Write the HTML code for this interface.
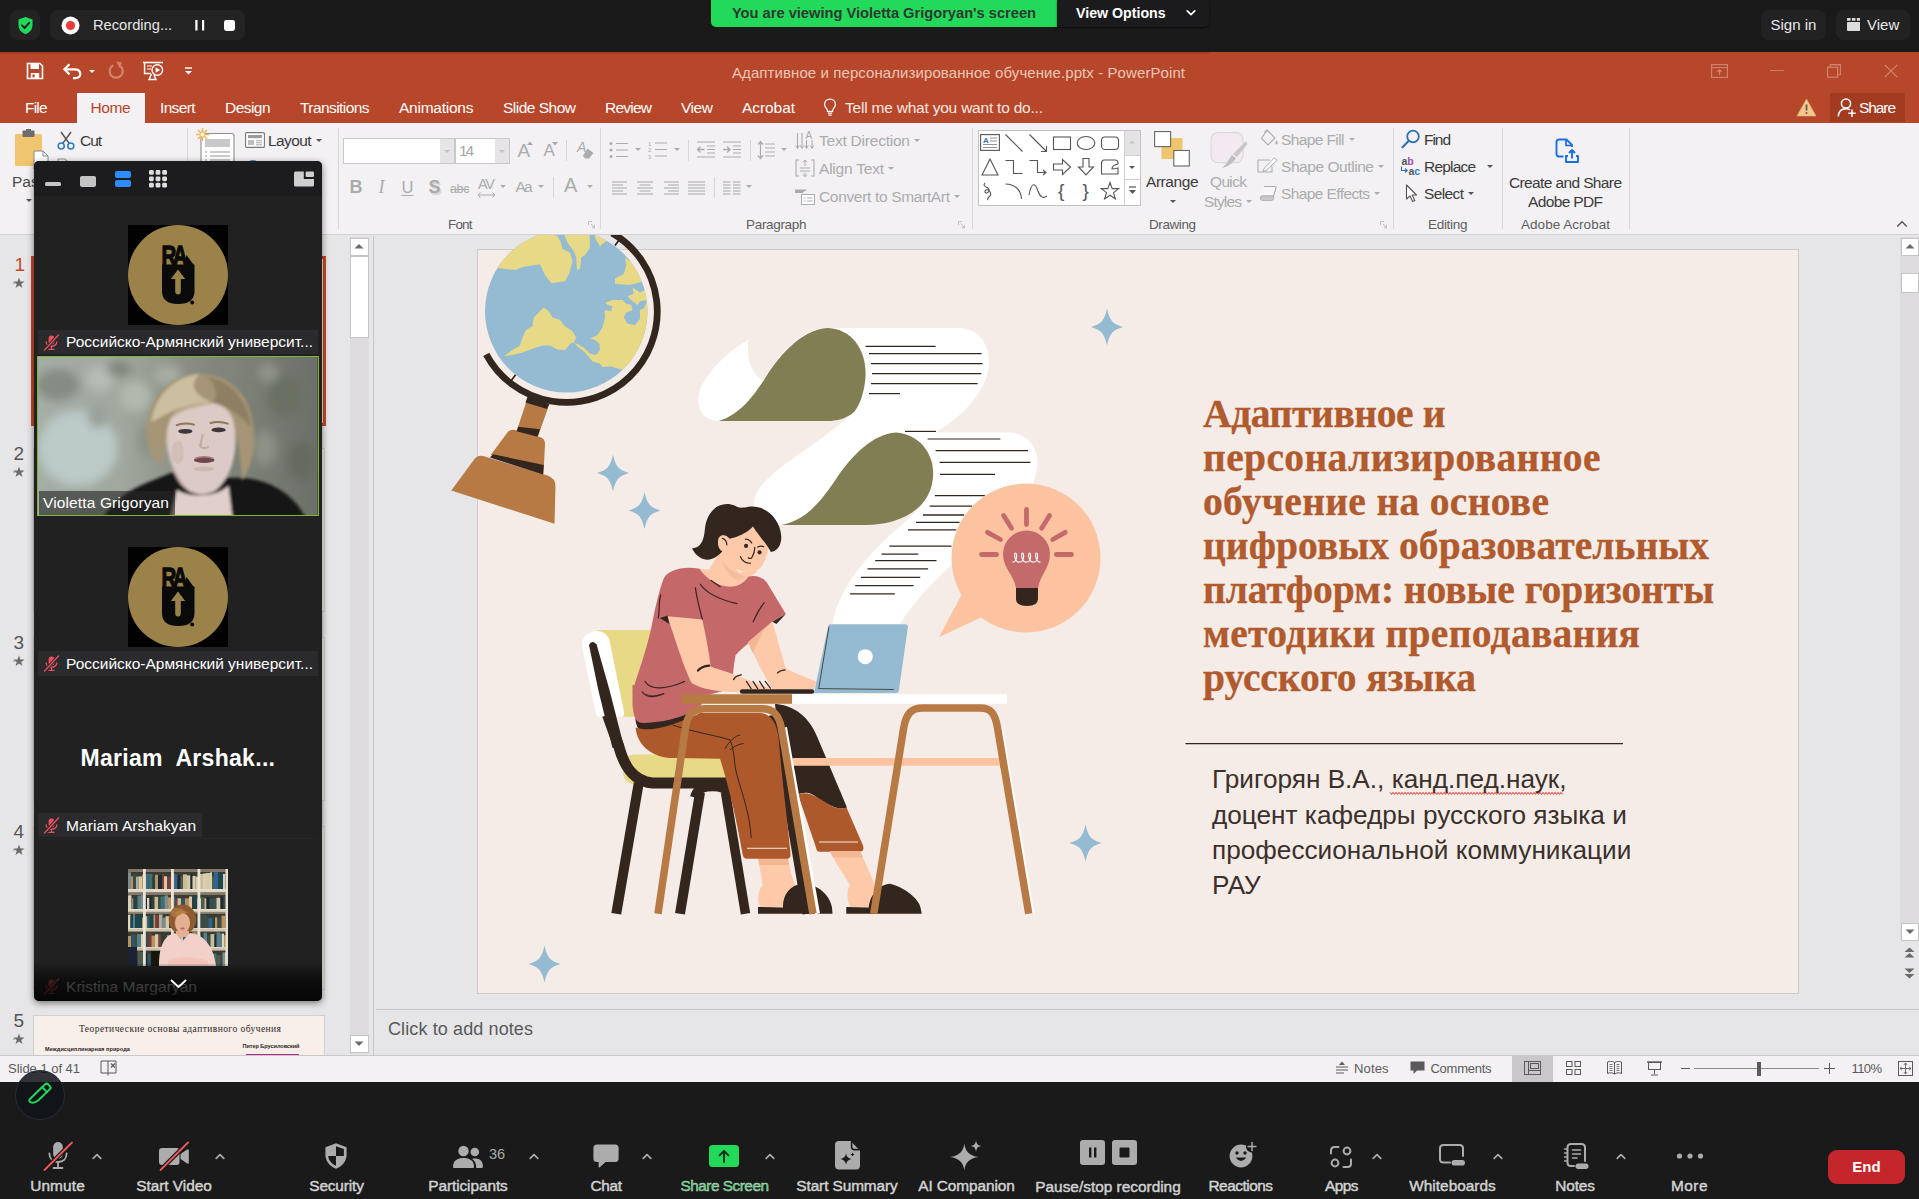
<!DOCTYPE html>
<html lang="en">
<head>
<meta charset="utf-8">
<title>Zoom Meeting</title>
<style>
*{box-sizing:border-box;margin:0;padding:0}
html,body{width:1919px;height:1199px;overflow:hidden;background:#1a1a1a;font-family:"Liberation Sans",sans-serif;}
.abs{position:absolute}
#root{position:relative;width:1919px;height:1199px;overflow:hidden}
/* zoom top */
#ztop{left:0;top:0;width:1919px;height:52px;background:#1a1a1a}
/* ppt */
#ppt{left:0;top:52px;width:1919px;height:1030px;background:#e6e6e8;overflow:hidden}
#ptitle{left:0;top:0;width:1919px;height:71px;background:#b7472a}
#ribbon{left:0;top:71px;width:1919px;height:111px;background:#f3f1f3;border-bottom:1px solid #d4d3d5}
#status{left:0;top:1003px;width:1919px;height:27px;background:#f3f1f3;border-top:1px solid #c8c7c9}
#slide{left:477px;top:197px;width:1322px;height:745px;background:#f5ece7;border:1px solid #cfcdce}
/* zoom bottom */
#zbot{left:0;top:1082px;width:1919px;height:117px;background:#1a1a1a}
/* gallery */
#gal{left:34px;top:161px;width:288px;height:840px;background:#222;border-radius:6px;overflow:hidden;box-shadow:0 2px 8px rgba(0,0,0,.45)}

/* ---- zoom top bar ---- */
.zbtn{position:absolute;background:#242424;border-radius:8px;color:#e8e8e8;font-size:15px;line-height:30px;height:30px;top:10px}
#zshield{left:10.2px;top:10.2px;width:29.8px;height:29.8px;border-radius:8px;background:#232323;position:absolute}
#zbanner{position:absolute;left:711px;top:0;width:346px;height:27px;background:#23d959;border-radius:0 0 0 5px;color:#2c3a32;font-weight:700;font-size:14.7px;line-height:27px;text-align:center;letter-spacing:-0.02px}
#zvopt{position:absolute;left:1057px;top:0;width:152px;height:27px;background:#1b1b1d;border-radius:0 0 5px 0;color:#fff;font-weight:700;font-size:14.2px;line-height:27px;padding-left:19px;box-shadow:0 1px 2px rgba(0,0,0,.6)}
/* ---- zoom bottom bar ---- */
.zi{position:absolute;top:0;height:117px;text-align:center;color:#d2d2d2;font-weight:700;font-size:14.2px;white-space:nowrap}
.zi svg{position:absolute;left:50%;transform:translateX(-50%)}
.zi .lb{position:absolute;left:50%;transform:translateX(-50%);top:93px;line-height:20px}
.car{position:absolute;top:68px;width:12px;height:12px}
.zl{top:94px;text-align:center;font-weight:400;-webkit-text-stroke:0.45px #d2d2d2;font-size:15.4px;line-height:20px;color:#d2d2d2;white-space:nowrap}

.t{position:absolute;white-space:pre}
</style>
</head>
<body>
<div id="root">
<div id="ztop" class="abs">
  <div id="zshield"><svg style="position:absolute;left:1.4px;top:1.6px" width="27" height="27" viewBox="0 0 27 27"><path d="M13.5 5 L20.5 7.6 V13 C20.5 17.4 17.6 20.6 13.5 22.2 C9.4 20.6 6.5 17.4 6.5 13 V7.6 Z" fill="#23d959"/><path d="M10 13.4 L12.6 16 L17.2 10.9" fill="none" stroke="#1f2a22" stroke-width="2" stroke-linecap="round" stroke-linejoin="round"/></svg></div>
  <div class="zbtn" style="left:50px;width:195px;">
    <svg class="abs" style="left:11px;top:5.5px" width="19" height="19" viewBox="0 0 19 19"><circle cx="9.5" cy="9.5" r="9" fill="#fff"/><circle cx="9.5" cy="9.5" r="4.6" fill="#f03a3a"/></svg>
    <span class="abs" style="left:43px;top:0;font-size:14.7px;color:#e4e4e4">Recording...</span>
    <svg class="abs" style="left:144px;top:9.5px" width="12" height="11" viewBox="0 0 12 11"><rect x="1.3" y="0" width="2.2" height="10.5" fill="#fff"/><rect x="8" y="0" width="2.2" height="10.5" fill="#fff"/></svg>
    <div class="abs" style="left:174px;top:9.5px;width:11px;height:11px;border-radius:2.4px;background:#fff"></div>
  </div>
  <div id="zbanner">You are viewing Violetta Grigoryan's screen</div>
  <div id="zvopt">View Options<svg class="abs" style="left:129px;top:9px" width="10" height="8" viewBox="0 0 10 8"><path d="M1.2 1.8 L5 5.6 L8.8 1.8" fill="none" stroke="#fff" stroke-width="1.7" stroke-linecap="round" stroke-linejoin="round"/></svg></div>
  <div class="zbtn" style="left:1761.3px;top:9.8px;height:30px;line-height:30px;width:64.3px;text-align:center;background:#222">Sign in</div>
  <div class="zbtn" style="left:1836px;top:9.8px;height:30px;line-height:30px;width:73.8px;background:#222">
    <svg class="abs" style="left:10.8px;top:8.5px" width="13.4" height="13" viewBox="0 0 13.4 13"><rect x="0" y="0" width="3.6" height="2.8" rx="0.6" fill="#dcdcdc"/><rect x="4.9" y="0" width="3.6" height="2.8" rx="0.6" fill="#dcdcdc"/><rect x="9.8" y="0" width="3.6" height="2.8" rx="0.6" fill="#dcdcdc"/><rect x="0" y="4" width="13.4" height="9" rx="1" fill="#dcdcdc"/></svg>
    <span class="abs" style="left:31px;top:0">View</span>
  </div>
</div>
<!-- ppt_top -->
<div class="abs" style="left:0px;top:52px;width:1919px;height:71px;background:#b7472a;"></div>
<div class="abs" style="left:0px;top:52px;width:1209px;height:1.5px;background:#a23c22;"></div>
<svg class="abs" style="left:26px;top:62px;" width="18" height="18" viewBox="0 0 18 18"><path d="M1.5 1.5 H14 L16.5 4 V16.5 H1.5 Z" fill="none" stroke="#fff" stroke-width="1.6"/><rect x="4.5" y="2" width="8.5" height="5" fill="#fff"/><rect x="4.8" y="11" width="8.4" height="5.5" fill="#fff"/><rect x="6.4" y="12.4" width="2.2" height="3" fill="#b7472a"/></svg>
<svg class="abs" style="left:62px;top:62px;" width="22" height="18" viewBox="0 0 22 18"><path d="M7.5 2.2 L2.4 7.3 L7.5 12.4" fill="none" stroke="#fff" stroke-width="2.2" stroke-linejoin="miter"/><path d="M3 7.3 H12.5 C20 7.3 20 16 13.5 16.2 H11" fill="none" stroke="#fff" stroke-width="2.2"/></svg>
<svg class="abs" style="left:89.0px;top:70.0px;" width="6" height="3.5" viewBox="0 0 6 3.5"><path d="M0 0 H6 L3.0 3.0 Z" fill="#fff"/></svg>
<svg class="abs" style="left:107px;top:61px;" width="18" height="19" viewBox="0 0 18 19"><path d="M13.6 5.2 A6.6 6.6 0 1 1 6.2 4.2" fill="none" stroke="#d2846e" stroke-width="2.2"/><path d="M9.2 0.5 L14.8 1.6 L13 7.4 Z" fill="#d2846e"/></svg>
<svg class="abs" style="left:142px;top:61px;" width="24" height="20" viewBox="0 0 24 20"><path d="M1 1.5 H21" stroke="#fff" stroke-width="1.6"/><path d="M2.6 2 V12.5 H9" fill="none" stroke="#fff" stroke-width="1.5"/><path d="M5 5 H10 M5 8 H9" stroke="#fff" stroke-width="1.2"/><circle cx="15.3" cy="9" r="5.3" fill="none" stroke="#fff" stroke-width="1.4"/><path d="M13.6 6.2 L18.2 9 L13.6 11.8 Z" fill="#fff"/><path d="M9.5 13 L7 18.5 H14 L12 14" fill="none" stroke="#fff" stroke-width="1.4"/></svg>
<svg class="abs" style="left:184px;top:67px;" width="9" height="9" viewBox="0 0 9 9"><path d="M1 1 H8" stroke="#fff" stroke-width="1.4"/><path d="M1 4 H8 L4.5 7.6 Z" fill="#fff"/></svg>
<div class="t" style="left:732.0px;top:62.5px;font-size:15px;line-height:20px;color:#edc6b8;letter-spacing:0.086px;">Адаптивное и персонализированное обучение.pptx - PowerPoint</div>
<svg class="abs" style="left:1711px;top:64px;" width="17" height="14" viewBox="0 0 17 14"><rect x="0.6" y="0.6" width="15.8" height="12.8" fill="none" stroke="#d28670" stroke-width="1.1"/><path d="M0.6 3.6 H16.4" stroke="#d28670" stroke-width="1"/><path d="M8.5 11 V6 M6.2 8 L8.5 5.7 L10.8 8" fill="none" stroke="#d28670" stroke-width="1.1"/></svg>
<div class="abs" style="left:1770px;top:70px;width:14px;height:1px;background:#cf7a63;"></div>
<svg class="abs" style="left:1827px;top:64px;" width="14" height="14" viewBox="0 0 14 14"><rect x="0.6" y="3.2" width="10" height="10" fill="none" stroke="#d28670" stroke-width="1.1"/><path d="M3.2 3.2 V0.6 H13.4 V10.8 H10.6" fill="none" stroke="#d28670" stroke-width="1.1"/></svg>
<svg class="abs" style="left:1884px;top:64px;" width="14" height="14" viewBox="0 0 14 14"><path d="M0.8 0.8 L13.2 13.2 M13.2 0.8 L0.8 13.2" stroke="#d28670" stroke-width="1.2"/></svg>
<div class="abs" style="left:77px;top:93px;width:68px;height:30px;background:#f3f1f3;"></div>
<div class="t" style="left:25.0px;top:97.5px;font-size:15.5px;line-height:20px;color:#fff;letter-spacing:-0.826px;">File</div>
<div class="t" style="left:160.0px;top:97.5px;font-size:15.5px;line-height:20px;color:#fff;letter-spacing:-0.653px;">Insert</div>
<div class="t" style="left:225.0px;top:97.5px;font-size:15.5px;line-height:20px;color:#fff;letter-spacing:-0.550px;">Design</div>
<div class="t" style="left:300.0px;top:97.5px;font-size:15.5px;line-height:20px;color:#fff;letter-spacing:-0.573px;">Transitions</div>
<div class="t" style="left:399.0px;top:97.5px;font-size:15.5px;line-height:20px;color:#fff;letter-spacing:-0.242px;">Animations</div>
<div class="t" style="left:503.0px;top:97.5px;font-size:15.5px;line-height:20px;color:#fff;letter-spacing:-0.505px;">Slide Show</div>
<div class="t" style="left:605.0px;top:97.5px;font-size:15.5px;line-height:20px;color:#fff;letter-spacing:-0.765px;">Review</div>
<div class="t" style="left:681.0px;top:97.5px;font-size:15.5px;line-height:20px;color:#fff;letter-spacing:-0.439px;">View</div>
<div class="t" style="left:742.0px;top:97.5px;font-size:15.5px;line-height:20px;color:#fff;letter-spacing:-0.070px;">Acrobat</div>
<div class="t" style="left:90.5px;top:97.5px;font-size:15.5px;line-height:20px;color:#bb4429;letter-spacing:-0.449px;">Home</div>
<svg class="abs" style="left:823px;top:98px;" width="14" height="19" viewBox="0 0 14 19"><path d="M7 1.2 C3.6 1.2 1.6 3.6 1.6 6.4 C1.6 8.6 3 9.8 3.8 11 C4.3 11.8 4.4 12.6 4.4 13.4 H9.6 C9.6 12.6 9.7 11.8 10.2 11 C11 9.8 12.4 8.6 12.4 6.4 C12.4 3.6 10.4 1.2 7 1.2 Z M4.8 15.2 H9.2 M5.4 17.2 H8.6" fill="none" stroke="#fff" stroke-width="1.2"/></svg>
<div class="t" style="left:845.0px;top:97.5px;font-size:15.5px;line-height:20px;color:#fbe9e3;letter-spacing:-0.213px;">Tell me what you want to do...</div>
<svg class="abs" style="left:1796px;top:98px;" width="21" height="19" viewBox="0 0 21 19"><path d="M10.5 1 L20 18 H1 Z" fill="#f1c98d" stroke="#e0b070" stroke-width="0.6" stroke-linejoin="round"/><path d="M10.5 6.5 V12.5" stroke="#6b5848" stroke-width="1.8"/><circle cx="10.5" cy="15" r="1.1" fill="#b0463a"/></svg>
<div class="abs" style="left:1830px;top:93px;width:75px;height:29px;background:#a33b20;"></div>
<svg class="abs" style="left:1837px;top:97px;" width="20" height="21" viewBox="0 0 20 21"><circle cx="9" cy="6.5" r="4.6" fill="none" stroke="#fff" stroke-width="1.5"/><path d="M1.2 19.5 C1.6 14.4 4.6 11.8 9 11.8 C10.6 11.8 12 12.2 13 12.8" fill="none" stroke="#fff" stroke-width="1.5"/><path d="M15 12.6 V20 M11.3 16.3 H18.7" stroke="#fff" stroke-width="1.5"/></svg>
<div class="t" style="left:1859.0px;top:98.0px;font-size:15.5px;line-height:20px;color:#fff;letter-spacing:-1.091px;">Share</div>
<div class="abs" style="left:0px;top:123px;width:1919px;height:111px;background:#f3f1f3;"></div>
<div class="abs" style="left:0px;top:234px;width:1919px;height:1px;background:#d2d0d2;"></div>
<div class="abs" style="left:187px;top:128px;width:1px;height:101px;background:#d8d6d8;"></div>
<div class="abs" style="left:338px;top:128px;width:1px;height:101px;background:#d8d6d8;"></div>
<div class="abs" style="left:600.3px;top:128px;width:1px;height:101px;background:#d8d6d8;"></div>
<div class="abs" style="left:971.5px;top:128px;width:1px;height:101px;background:#d8d6d8;"></div>
<div class="abs" style="left:1392.5px;top:128px;width:1px;height:101px;background:#d8d6d8;"></div>
<div class="abs" style="left:1502px;top:128px;width:1px;height:101px;background:#d8d6d8;"></div>
<div class="abs" style="left:1628.7px;top:128px;width:1px;height:101px;background:#d8d6d8;"></div>
<svg class="abs" style="left:14px;top:129px;" width="36" height="40" viewBox="0 0 36 40"><rect x="1" y="5" width="27" height="32" rx="1.5" fill="#efc56f"/><rect x="8.5" y="1.5" width="12" height="6.5" rx="1" fill="#6d6d6d"/><rect x="12" y="0" width="5" height="3" fill="#6d6d6d"/><path d="M20 22 H29 L34 27 V40 H20 Z" fill="#fff" stroke="#8a8a8a" stroke-width="1"/><path d="M29 22 V27 H34" fill="none" stroke="#8a8a8a" stroke-width="1"/></svg>
<div class="t" style="left:12.0px;top:172.0px;font-size:15.5px;line-height:20px;color:#4a4a4a;">Paste</div>
<svg class="abs" style="left:26.0px;top:199.0px;" width="6" height="3.5" viewBox="0 0 6 3.5"><path d="M0 0 H6 L3.0 3.0 Z" fill="#555"/></svg>
<svg class="abs" style="left:57px;top:131px;" width="18" height="19" viewBox="0 0 18 19"><path d="M4 1 L12.2 12.4 M14 1 L5.8 12.4" stroke="#555" stroke-width="1.5"/><circle cx="4.2" cy="15" r="3" fill="none" stroke="#2b79c2" stroke-width="1.5"/><circle cx="13.8" cy="15" r="3" fill="none" stroke="#2b79c2" stroke-width="1.5"/></svg>
<div class="t" style="left:80.0px;top:131.0px;font-size:15.5px;line-height:20px;color:#3b3b3b;letter-spacing:-1.060px;">Cut</div>
<svg class="abs" style="left:57px;top:158px;" width="14" height="8" viewBox="0 0 14 8"><path d="M1 8 V1 H8 L11 4" fill="none" stroke="#9a9a9a" stroke-width="1.1"/></svg>
<svg class="abs" style="left:196px;top:128px;" width="40" height="40" viewBox="0 0 40 40"><rect x="5" y="5.5" width="33" height="36" rx="2" fill="#fff" stroke="#8d8d8d" stroke-width="1.1"/><rect x="9" y="11" width="25" height="8" fill="#c9c9c9"/><path d="M9 24 H11 M14 24 H34 M9 28 H11 M14 28 H34 M9 32 H11 M14 32 H34" stroke="#9a9a9a" stroke-width="1.1"/><g stroke="#eeb45a" stroke-width="1.4"><path d="M6.5 0 V13 M0 6.5 H13 M1.9 1.9 L11.1 11.1 M11.1 1.9 L1.9 11.1"/></g><circle cx="6.5" cy="6.5" r="2.6" fill="#fff3d6" stroke="#eeb45a" stroke-width="1"/></svg>
<svg class="abs" style="left:245px;top:132px;" width="20" height="16" viewBox="0 0 20 16"><rect x="0.6" y="0.6" width="18.8" height="14.8" rx="1" fill="#fff" stroke="#777" stroke-width="1.1"/><rect x="3" y="3" width="14" height="3.2" fill="#9a9a9a"/><rect x="3" y="8" width="6" height="5" fill="#bdbdbd"/><path d="M11 8.8 H17 M11 10.8 H17 M11 12.8 H17" stroke="#9a9a9a" stroke-width="0.9"/></svg>
<div class="t" style="left:268.0px;top:131.0px;font-size:15.5px;line-height:20px;color:#3b3b3b;letter-spacing:-0.608px;">Layout</div>
<svg class="abs" style="left:316.0px;top:139.0px;" width="6" height="3.5" viewBox="0 0 6 3.5"><path d="M0 0 H6 L3.0 3.0 Z" fill="#555"/></svg>
<svg class="abs" style="left:247px;top:159px;" width="12" height="6" viewBox="0 0 12 6"><path d="M1 5 C2 1.5 7 0.5 10 3" fill="none" stroke="#4b8fd0" stroke-width="1.4"/></svg>
<div class="abs" style="left:343px;top:137.5px;width:111.5px;height:26px;background:#fff;border:1px solid #c9c7c9"></div>
<div class="abs" style="left:440px;top:138.5px;width:13.5px;height:24px;background:#e6e4e6;"></div>
<svg class="abs" style="left:444.0px;top:149.5px;" width="6" height="3.5" viewBox="0 0 6 3.5"><path d="M0 0 H6 L3.0 3.0 Z" fill="#c2c0c2"/></svg>
<div class="abs" style="left:455px;top:137.5px;width:54.5px;height:26px;background:#fff;border:1px solid #c9c7c9"></div>
<div class="abs" style="left:495px;top:138.5px;width:13.5px;height:24px;background:#e6e4e6;"></div>
<svg class="abs" style="left:499.0px;top:149.5px;" width="6" height="3.5" viewBox="0 0 6 3.5"><path d="M0 0 H6 L3.0 3.0 Z" fill="#c2c0c2"/></svg>
<div class="t" style="left:459.0px;top:140.5px;font-size:15.5px;line-height:20px;color:#a6a4a6;letter-spacing:-2.241px;">14</div>
<div class="t" style="left:517.5px;top:137.5px;font-size:19px;line-height:25px;color:#ababad;">A</div>
<svg class="abs" style="left:527px;top:141px;" width="6" height="4" viewBox="0 0 6 4"><path d="M0 4 L3 0.5 L6 4 Z" fill="#ababad"/></svg>
<div class="t" style="left:543.5px;top:140.0px;font-size:17px;line-height:22px;color:#ababad;">A</div>
<svg class="abs" style="left:552px;top:142px;" width="6" height="4" viewBox="0 0 6 4"><path d="M0 0 L3 3.5 L6 0 Z" fill="#ababad"/></svg>
<div class="abs" style="left:566px;top:140px;width:1px;height:21px;background:#d8d6d8;"></div>
<div class="t" style="left:577.0px;top:138.0px;font-size:14px;line-height:18px;color:#ababad;font-style:italic;">A</div>
<svg class="abs" style="left:582px;top:148px;" width="12" height="11" viewBox="0 0 12 11"><path d="M5.5 0.5 L11.5 5 L7 10.5 H3.5 L0.8 8 Z" fill="#ababad"/></svg>
<div class="t" style="left:349.5px;top:175.5px;font-size:18px;line-height:23px;color:#ababad;font-weight:700;">B</div>
<div class="t" style="left:378.5px;top:175.5px;font-size:18px;line-height:23px;color:#ababad;font-style:italic;font-family:'Liberation Serif',serif;">I</div>
<div class="t" style="left:401.5px;top:176.5px;font-size:16.5px;line-height:21px;color:#ababad;text-decoration:underline;text-underline-offset:2px">U</div>
<div class="t" style="left:428.5px;top:175.5px;font-size:18px;line-height:23px;color:#ababad;font-weight:700;text-shadow:1.5px 1.5px 1px #d6d4d6">S</div>
<div class="t" style="left:450.0px;top:181.0px;font-size:12.5px;line-height:16px;color:#ababad;letter-spacing:-0.327px;text-decoration:line-through">abc</div>
<div class="t" style="left:478.0px;top:174.5px;font-size:14.5px;line-height:19px;color:#ababad;letter-spacing:-1.268px;">AV</div>
<svg class="abs" style="left:477px;top:192px;" width="19" height="6" viewBox="0 0 19 6"><path d="M1 3 H18 M3.5 0.5 L1 3 L3.5 5.5 M15.5 0.5 L18 3 L15.5 5.5" fill="none" stroke="#ababad" stroke-width="1"/></svg>
<svg class="abs" style="left:500.0px;top:185.0px;" width="6" height="3.5" viewBox="0 0 6 3.5"><path d="M0 0 H6 L3.0 3.0 Z" fill="#ababad"/></svg>
<div class="t" style="left:515.5px;top:177.0px;font-size:15.5px;line-height:20px;color:#ababad;letter-spacing:-1.960px;">Aa</div>
<svg class="abs" style="left:538.0px;top:185.0px;" width="6" height="3.5" viewBox="0 0 6 3.5"><path d="M0 0 H6 L3.0 3.0 Z" fill="#ababad"/></svg>
<div class="abs" style="left:553px;top:177px;width:1px;height:21px;background:#d8d6d8;"></div>
<div class="t" style="left:564.0px;top:171.5px;font-size:20px;line-height:26px;color:#ababad;">A</div>
<svg class="abs" style="left:587.0px;top:185.0px;" width="6" height="3.5" viewBox="0 0 6 3.5"><path d="M0 0 H6 L3.0 3.0 Z" fill="#ababad"/></svg>
<div class="t" style="left:448.0px;top:215.8px;font-size:13.5px;line-height:18px;color:#5e5e5e;letter-spacing:-0.838px;">Font</div>
<svg class="abs" style="left:587.5px;top:221px;" width="7.5" height="7.5" viewBox="0 0 9 9"><path d="M0.5 5 V0.5 H5" fill="none" stroke="#b5b3b5" stroke-width="1"/><path d="M3 3 L8 8 M8 4.5 V8 H4.5" fill="none" stroke="#b5b3b5" stroke-width="1"/></svg>
<svg class="abs" style="left:609px;top:141px;" width="20" height="18" viewBox="0 0 20 18"><circle cx="2" cy="2.5" r="1.5" fill="#ababad"/><circle cx="2" cy="9" r="1.5" fill="#ababad"/><circle cx="2" cy="15.5" r="1.5" fill="#ababad"/><path d="M7 2.5 H19 M7 9 H19 M7 15.5 H19" stroke="#ababad" stroke-width="1.1"/></svg>
<svg class="abs" style="left:634.5px;top:148.0px;" width="6" height="3.5" viewBox="0 0 6 3.5"><path d="M0 0 H6 L3.0 3.0 Z" fill="#ababad"/></svg>
<svg class="abs" style="left:648px;top:140px;" width="20" height="19" viewBox="0 0 20 19"><path d="M7 3 H19 M7 9.5 H19 M7 16 H19" stroke="#ababad" stroke-width="1.1"/><text x="0" y="5.5" font-size="6" fill="#ababad" font-family="Liberation Sans,sans-serif">1</text><text x="0" y="12" font-size="6" fill="#ababad" font-family="Liberation Sans,sans-serif">2</text><text x="0" y="18.5" font-size="6" fill="#ababad" font-family="Liberation Sans,sans-serif">3</text></svg>
<svg class="abs" style="left:674.0px;top:148.0px;" width="6" height="3.5" viewBox="0 0 6 3.5"><path d="M0 0 H6 L3.0 3.0 Z" fill="#ababad"/></svg>
<div class="abs" style="left:688px;top:140px;width:1px;height:21px;background:#d8d6d8;"></div>
<svg class="abs" style="left:696px;top:141px;" width="20" height="17" viewBox="0 0 20 17"><path d="M1 1 H19 M11 5 H19 M11 8.5 H19 M11 12 H19 M1 16 H19" stroke="#ababad" stroke-width="1.1"/><path d="M8.5 8.5 H1.5 M4.5 5.5 L1.5 8.5 L4.5 11.5" fill="none" stroke="#ababad" stroke-width="1.3"/></svg>
<svg class="abs" style="left:722px;top:141px;" width="20" height="17" viewBox="0 0 20 17"><path d="M1 1 H19 M11 5 H19 M11 8.5 H19 M11 12 H19 M1 16 H19" stroke="#ababad" stroke-width="1.1"/><path d="M1 8.5 H8 M5 5.5 L8 8.5 L5 11.5" fill="none" stroke="#ababad" stroke-width="1.3"/></svg>
<div class="abs" style="left:749.5px;top:140px;width:1px;height:21px;background:#d8d6d8;"></div>
<svg class="abs" style="left:757px;top:140px;" width="19" height="20" viewBox="0 0 19 20"><path d="M8 4 H18 M8 8 H18 M8 12 H18 M8 16 H18" stroke="#ababad" stroke-width="1.1"/><path d="M3.5 2 V18 M1 4.5 L3.5 1.5 L6 4.5 M1 15.5 L3.5 18.5 L6 15.5" fill="none" stroke="#ababad" stroke-width="1.2"/></svg>
<svg class="abs" style="left:781.0px;top:148.0px;" width="6" height="3.5" viewBox="0 0 6 3.5"><path d="M0 0 H6 L3.0 3.0 Z" fill="#ababad"/></svg>
<svg class="abs" style="left:611.5px;top:180.5px;" width="18" height="14" viewBox="0 0 18 14"><path d="M0 1 H15" stroke="#ababad" stroke-width="1.1"/><path d="M0 4 H11" stroke="#ababad" stroke-width="1.1"/><path d="M0 7 H15" stroke="#ababad" stroke-width="1.1"/><path d="M0 10 H11" stroke="#ababad" stroke-width="1.1"/><path d="M0 13 H15" stroke="#ababad" stroke-width="1.1"/></svg>
<svg class="abs" style="left:637px;top:180.5px;" width="18" height="14" viewBox="0 0 18 14"><path d="M0 1 H16" stroke="#ababad" stroke-width="1.1"/><path d="M2.5 4 H13.5" stroke="#ababad" stroke-width="1.1"/><path d="M0 7 H16" stroke="#ababad" stroke-width="1.1"/><path d="M2.5 10 H13.5" stroke="#ababad" stroke-width="1.1"/><path d="M0 13 H16" stroke="#ababad" stroke-width="1.1"/></svg>
<svg class="abs" style="left:663.5px;top:180.5px;" width="18" height="14" viewBox="0 0 18 14"><path d="M0 1 H15" stroke="#ababad" stroke-width="1.1"/><path d="M4 4 H15" stroke="#ababad" stroke-width="1.1"/><path d="M0 7 H15" stroke="#ababad" stroke-width="1.1"/><path d="M4 10 H15" stroke="#ababad" stroke-width="1.1"/><path d="M0 13 H15" stroke="#ababad" stroke-width="1.1"/></svg>
<svg class="abs" style="left:688px;top:180.5px;" width="18" height="14" viewBox="0 0 18 14"><path d="M0 1 H17" stroke="#ababad" stroke-width="1.1"/><path d="M0 4 H17" stroke="#ababad" stroke-width="1.1"/><path d="M0 7 H17" stroke="#ababad" stroke-width="1.1"/><path d="M0 10 H17" stroke="#ababad" stroke-width="1.1"/><path d="M0 13 H17" stroke="#ababad" stroke-width="1.1"/></svg>
<div class="abs" style="left:714px;top:177px;width:1px;height:21px;background:#d8d6d8;"></div>
<svg class="abs" style="left:722.5px;top:180.5px;" width="18" height="14" viewBox="0 0 18 14"><path d="M0 1 H7.5" stroke="#ababad" stroke-width="1.1"/><path d="M0 4 H7.5" stroke="#ababad" stroke-width="1.1"/><path d="M0 7 H7.5" stroke="#ababad" stroke-width="1.1"/><path d="M0 10 H7.5" stroke="#ababad" stroke-width="1.1"/><path d="M0 13 H7.5" stroke="#ababad" stroke-width="1.1"/><path d="M10 1 H17.5" stroke="#ababad" stroke-width="1.1"/><path d="M10 4 H17.5" stroke="#ababad" stroke-width="1.1"/><path d="M10 7 H17.5" stroke="#ababad" stroke-width="1.1"/><path d="M10 10 H17.5" stroke="#ababad" stroke-width="1.1"/><path d="M10 13 H17.5" stroke="#ababad" stroke-width="1.1"/></svg>
<svg class="abs" style="left:746.0px;top:185.0px;" width="6" height="3.5" viewBox="0 0 6 3.5"><path d="M0 0 H6 L3.0 3.0 Z" fill="#ababad"/></svg>
<svg class="abs" style="left:795px;top:130px;" width="20" height="20" viewBox="0 0 20 20"><path d="M2.5 3 V18 M7 3 V18 M11.5 10 V18" stroke="#ababad" stroke-width="1.1"/><path d="M0.8 15.5 L2.5 18.5 L4.2 15.5 M5.3 15.5 L7 18.5 L8.7 15.5 M9.8 15.5 L11.5 18.5 L13.2 15.5" fill="none" stroke="#ababad" stroke-width="1"/><text x="10.5" y="8.5" font-size="10" fill="#ababad" font-family="Liberation Sans,sans-serif">A</text><path d="M17 10 V18 M15.3 15.5 L17 18.5 L18.7 15.5" fill="none" stroke="#ababad" stroke-width="1"/></svg>
<div class="t" style="left:819.0px;top:131.0px;font-size:15.5px;line-height:20px;color:#ababad;letter-spacing:-0.223px;">Text Direction</div>
<svg class="abs" style="left:914.0px;top:139.0px;" width="6" height="3.5" viewBox="0 0 6 3.5"><path d="M0 0 H6 L3.0 3.0 Z" fill="#ababad"/></svg>
<svg class="abs" style="left:795px;top:159px;" width="20" height="18" viewBox="0 0 20 18"><path d="M4 1 H1 V17 H4 M16 1 H19 V17 H16" fill="none" stroke="#ababad" stroke-width="1.1"/><path d="M5 9 H15 M5 12 H15" stroke="#ababad" stroke-width="1"/><path d="M10 1 V7 M8 3.2 L10 1 L12 3.2 M10 13.5 V17.5 M8 15.5 L10 17.7 L12 15.5" fill="none" stroke="#ababad" stroke-width="1"/></svg>
<div class="t" style="left:819.0px;top:159.0px;font-size:15.5px;line-height:20px;color:#ababad;letter-spacing:-0.213px;">Align Text</div>
<svg class="abs" style="left:888.0px;top:167.0px;" width="6" height="3.5" viewBox="0 0 6 3.5"><path d="M0 0 H6 L3.0 3.0 Z" fill="#ababad"/></svg>
<svg class="abs" style="left:795px;top:189px;" width="20" height="16" viewBox="0 0 20 16"><path d="M0 0.5 H12 L7.5 4 H0 Z" fill="#ababad"/><rect x="6.5" y="5.5" width="13" height="10" fill="#fff" stroke="#ababad" stroke-width="1"/><path d="M9 9 H10.5 M12 9 H17.5 M9 12 H10.5 M12 12 H17.5" stroke="#ababad" stroke-width="1"/></svg>
<div class="t" style="left:819.0px;top:186.5px;font-size:15.5px;line-height:20px;color:#ababad;letter-spacing:-0.331px;">Convert to SmartArt</div>
<svg class="abs" style="left:954.0px;top:194.5px;" width="6" height="3.5" viewBox="0 0 6 3.5"><path d="M0 0 H6 L3.0 3.0 Z" fill="#ababad"/></svg>
<div class="t" style="left:746.0px;top:215.8px;font-size:13.5px;line-height:18px;color:#5e5e5e;letter-spacing:-0.318px;">Paragraph</div>
<svg class="abs" style="left:957.5px;top:221px;" width="7.5" height="7.5" viewBox="0 0 9 9"><path d="M0.5 5 V0.5 H5" fill="none" stroke="#b5b3b5" stroke-width="1"/><path d="M3 3 L8 8 M8 4.5 V8 H4.5" fill="none" stroke="#b5b3b5" stroke-width="1"/></svg>
<!-- ppt_top2 -->
<div class="abs" style="left:977.5px;top:129.5px;width:163px;height:76px;background:#fff;border:1px solid #c4c2c4"></div>
<div class="abs" style="left:1124px;top:130.5px;width:15.5px;height:24px;background:#e4e2e4;"></div>
<div class="abs" style="left:1124px;top:154.5px;width:15.5px;height:1px;background:#d0ced0;"></div>
<div class="abs" style="left:1124px;top:178.5px;width:15.5px;height:1px;background:#d0ced0;"></div>
<div class="abs" style="left:1123.5px;top:130.5px;width:1px;height:74px;background:#d0ced0;"></div>
<svg class="abs" style="left:1129px;top:140px;" width="6" height="4" viewBox="0 0 6 4"><path d="M0 3.5 L3 0.5 L6 3.5 Z" fill="#c4c2c4"/></svg>
<svg class="abs" style="left:1129.0px;top:165.5px;" width="6" height="3.5" viewBox="0 0 6 3.5"><path d="M0 0 H6 L3.0 3.0 Z" fill="#555"/></svg>
<svg class="abs" style="left:1128.5px;top:186px;" width="7" height="9" viewBox="0 0 7 9"><path d="M0 1 H7" stroke="#555" stroke-width="1.2"/><path d="M0 4 H7 L3.5 8 Z" fill="#555"/></svg>
<svg class="abs" style="left:979.5px;top:134.0px;" width="20" height="17" viewBox="0 0 20 17"><rect x="0.6" y="0.6" width="18.8" height="15.8" fill="#fff" stroke="#555" stroke-width="1.1"/><text x="3" y="9" font-size="8" font-weight="700" fill="#3c6fb8" font-family="Liberation Sans,sans-serif">A</text><path d="M10 4 H17 M10 7 H17 M3 10.5 H17 M3 13.5 H17" stroke="#888" stroke-width="0.9"/></svg>
<svg class="abs" style="left:1004px;top:132.5px;" width="20" height="20" viewBox="0 0 20 20"><g fill="none" stroke="#555" stroke-width="1.1"><path d="M1.5 1.5 L18.5 18.5"/></g></svg>
<svg class="abs" style="left:1028px;top:132.5px;" width="20" height="20" viewBox="0 0 20 20"><g fill="none" stroke="#555" stroke-width="1.1"><path d="M1.5 1.5 L18 18 M18.5 13 V18.5 H13"/></g></svg>
<svg class="abs" style="left:1052px;top:132.5px;" width="20" height="20" viewBox="0 0 20 20"><g fill="none" stroke="#555" stroke-width="1.1"><rect x="1.5" y="4" width="17" height="12.5"/></g></svg>
<svg class="abs" style="left:1075.5px;top:132.5px;" width="20" height="20" viewBox="0 0 20 20"><g fill="none" stroke="#555" stroke-width="1.1"><ellipse cx="10" cy="10" rx="8.8" ry="6.5"/></g></svg>
<svg class="abs" style="left:1100px;top:132.5px;" width="20" height="20" viewBox="0 0 20 20"><g fill="none" stroke="#555" stroke-width="1.1"><rect x="1.5" y="4" width="17" height="12.5" rx="3.5"/></g></svg>
<svg class="abs" style="left:979.5px;top:157px;" width="20" height="20" viewBox="0 0 20 20"><g fill="none" stroke="#555" stroke-width="1.1"><path d="M10 2 L18 18 H2 Z"/></g></svg>
<svg class="abs" style="left:1004px;top:157px;" width="20" height="20" viewBox="0 0 20 20"><g fill="none" stroke="#555" stroke-width="1.1"><path d="M1.5 3.5 H9.5 V16.5 H18.5"/></g></svg>
<svg class="abs" style="left:1028px;top:157px;" width="20" height="20" viewBox="0 0 20 20"><g fill="none" stroke="#555" stroke-width="1.1"><path d="M1.5 3.5 H9.5 V15.5 H17.5 M15 13 L18 15.5 L15 18"/></g></svg>
<svg class="abs" style="left:1052px;top:157px;" width="20" height="20" viewBox="0 0 20 20"><g fill="none" stroke="#555" stroke-width="1.1"><path d="M1.5 7 H10.5 V2.5 L18.5 10 L10.5 17.5 V13 H1.5 Z"/></g></svg>
<svg class="abs" style="left:1075.5px;top:157px;" width="20" height="20" viewBox="0 0 20 20"><g fill="none" stroke="#555" stroke-width="1.1"><path d="M7 1.5 H13 V10 H17.5 L10 18 L2.5 10 H7 Z"/></g></svg>
<svg class="abs" style="left:1100px;top:157px;" width="20" height="20" viewBox="0 0 20 20"><g fill="none" stroke="#555" stroke-width="1.1"><path d="M1.5 17 V6 Q1.5 3 4.5 3 H15 Q18 3 18 6 V7 Q12 8 12 12 Q15 12 18 11 V17 Z"/></g></svg>
<svg class="abs" style="left:979.5px;top:181px;" width="20" height="20" viewBox="0 0 20 20"><g fill="none" stroke="#555" stroke-width="1.1"><path d="M5 2 C1 6 11 6 9 10 C7 14 3 11 6 9 C9 8 13 13 9 16 C8 17 7 18 8 19"/></g></svg>
<svg class="abs" style="left:1004px;top:181px;" width="20" height="20" viewBox="0 0 20 20"><g fill="none" stroke="#555" stroke-width="1.1"><path d="M1.5 3 C10 3 17 8 17.5 18"/></g></svg>
<svg class="abs" style="left:1028px;top:181px;" width="20" height="20" viewBox="0 0 20 20"><g fill="none" stroke="#555" stroke-width="1.1"><path d="M1 14 C4 -2 8 4 10 10 C12 16 15 18 19 15"/></g></svg>
<div class="t" style="left:1058.0px;top:177.5px;font-size:19px;line-height:25px;color:#555;">{</div>
<div class="t" style="left:1082.5px;top:177.5px;font-size:19px;line-height:25px;color:#555;">}</div>
<svg class="abs" style="left:1100px;top:181px;" width="20" height="20" viewBox="0 0 20 20"><g fill="none" stroke="#555" stroke-width="1.1"><path d="M10 1.5 L12.2 7.6 H18.6 L13.5 11.6 L15.4 18 L10 14.2 L4.6 18 L6.5 11.6 L1.4 7.6 H7.8 Z"/></g></svg>
<svg class="abs" style="left:1154px;top:131px;" width="37" height="36" viewBox="0 0 37 36"><rect x="7.5" y="7" width="21" height="21" fill="#efc56f"/><rect x="0.6" y="0.6" width="16" height="15" fill="#fff" stroke="#666" stroke-width="1.1"/><rect x="19.8" y="19.5" width="15.5" height="15.5" fill="#fff" stroke="#666" stroke-width="1.1"/></svg>
<div class="t" style="left:1146.0px;top:172.0px;font-size:15.5px;line-height:20px;color:#3b3b3b;letter-spacing:-0.441px;">Arrange</div>
<svg class="abs" style="left:1169.5px;top:199.5px;" width="6" height="3.5" viewBox="0 0 6 3.5"><path d="M0 0 H6 L3.0 3.0 Z" fill="#555"/></svg>
<svg class="abs" style="left:1210px;top:132px;" width="38" height="38" viewBox="0 0 38 38"><rect x="1" y="0.6" width="32" height="30" rx="7" fill="#f3eaf1" stroke="#d9d7d9" stroke-width="1.1"/><path d="M36 9 L37.5 12 L27 25 L23 22 Z" fill="#c9c7c9"/><path d="M22 23 C24 25 26 26 26 26 C24 31 17 35 12 36 C17 32 19 27 22 23 Z" fill="#c0bec0"/></svg>
<div class="t" style="left:1210.0px;top:172.0px;font-size:15.5px;line-height:20px;color:#ababad;letter-spacing:-0.655px;">Quick</div>
<div class="t" style="left:1204.0px;top:192.0px;font-size:15.5px;line-height:20px;color:#ababad;letter-spacing:-0.842px;">Styles</div>
<svg class="abs" style="left:1246.0px;top:200.0px;" width="6" height="3.5" viewBox="0 0 6 3.5"><path d="M0 0 H6 L3.0 3.0 Z" fill="#ababad"/></svg>
<svg class="abs" style="left:1260px;top:129px;" width="18" height="18" viewBox="0 0 18 18"><path d="M7 1 L15 9 L8 16 L1.5 9.5 Z M7 1 L4.5 3.5" fill="none" stroke="#ababad" stroke-width="1.1"/><path d="M16.5 11 C18 13.5 18 15.5 16.5 15.5 C15 15.5 15 13.5 16.5 11 Z" fill="#ababad"/></svg>
<div class="t" style="left:1281.0px;top:130.0px;font-size:15.5px;line-height:20px;color:#ababad;letter-spacing:-0.603px;">Shape Fill</div>
<svg class="abs" style="left:1349.0px;top:138.0px;" width="6" height="3.5" viewBox="0 0 6 3.5"><path d="M0 0 H6 L3.0 3.0 Z" fill="#ababad"/></svg>
<svg class="abs" style="left:1257px;top:157px;" width="21" height="18" viewBox="0 0 21 18"><path d="M13 3 H1 V15 H15 V9" fill="none" stroke="#ababad" stroke-width="1.1"/><path d="M17.5 0.8 L20 3.3 L9.5 13.2 L6 14.5 L7.4 11 Z" fill="#fff" stroke="#ababad" stroke-width="1"/></svg>
<div class="t" style="left:1281.0px;top:157.0px;font-size:15.5px;line-height:20px;color:#ababad;letter-spacing:-0.437px;">Shape Outline</div>
<svg class="abs" style="left:1378.0px;top:165.0px;" width="6" height="3.5" viewBox="0 0 6 3.5"><path d="M0 0 H6 L3.0 3.0 Z" fill="#ababad"/></svg>
<svg class="abs" style="left:1259px;top:185px;" width="19" height="17" viewBox="0 0 19 17"><path d="M5 1.5 H16 Q17.5 1.5 17 3 L14.5 11 H3 L1 13" fill="#f8f6f8" stroke="#ababad" stroke-width="1.1"/><path d="M1.2 13 Q1 15.5 3.5 15.5 H12.5 Q14.5 15.5 15 13 L14.5 11 H3 Z" fill="#c9c7c9" stroke="#ababad" stroke-width="0.8"/></svg>
<div class="t" style="left:1281.0px;top:184.0px;font-size:15.5px;line-height:20px;color:#ababad;letter-spacing:-0.602px;">Shape Effects</div>
<svg class="abs" style="left:1374.0px;top:192.0px;" width="6" height="3.5" viewBox="0 0 6 3.5"><path d="M0 0 H6 L3.0 3.0 Z" fill="#ababad"/></svg>
<div class="t" style="left:1149.0px;top:215.8px;font-size:13.5px;line-height:18px;color:#5e5e5e;letter-spacing:-0.420px;">Drawing</div>
<svg class="abs" style="left:1379.5px;top:221px;" width="7.5" height="7.5" viewBox="0 0 9 9"><path d="M0.5 5 V0.5 H5" fill="none" stroke="#b5b3b5" stroke-width="1"/><path d="M3 3 L8 8 M8 4.5 V8 H4.5" fill="none" stroke="#b5b3b5" stroke-width="1"/></svg>
<svg class="abs" style="left:1401px;top:129px;" width="20" height="20" viewBox="0 0 20 20"><circle cx="12" cy="7.5" r="5.8" fill="none" stroke="#2f6fb3" stroke-width="1.8"/><path d="M7.8 11.8 L1.5 18.2" stroke="#2f6fb3" stroke-width="2.2" stroke-linecap="round"/></svg>
<div class="t" style="left:1424.0px;top:130.0px;font-size:15.5px;line-height:20px;color:#3b3b3b;letter-spacing:-1.051px;">Find</div>
<svg class="abs" style="left:1400px;top:156px;" width="22" height="20" viewBox="0 0 22 20"><text x="1.5" y="8.5" font-size="10.5" fill="#555" font-family="Liberation Sans,sans-serif" font-weight="700">a<tspan fill="#9b4fb5">b</tspan></text><text x="8.5" y="18.5" font-size="10.5" fill="#555" font-family="Liberation Sans,sans-serif" font-weight="700">a<tspan fill="#2f7fc3">c</tspan></text><path d="M1.5 10.5 V14.5 H7 M5 12.5 L7.2 14.5 L5 16.5" fill="none" stroke="#2f6fb3" stroke-width="1.1"/></svg>
<div class="t" style="left:1424.0px;top:157.0px;font-size:15.5px;line-height:20px;color:#3b3b3b;letter-spacing:-0.812px;">Replace</div>
<svg class="abs" style="left:1486.5px;top:165.0px;" width="6" height="3.5" viewBox="0 0 6 3.5"><path d="M0 0 H6 L3.0 3.0 Z" fill="#555"/></svg>
<svg class="abs" style="left:1405px;top:184px;" width="13" height="19" viewBox="0 0 13 19"><path d="M1.5 1 V15 L5 11.8 L7.6 17.5 L9.8 16.5 L7.2 11 H11.5 Z" fill="#fff" stroke="#555" stroke-width="1.1" stroke-linejoin="round"/></svg>
<div class="t" style="left:1424.0px;top:184.0px;font-size:15.5px;line-height:20px;color:#3b3b3b;letter-spacing:-0.616px;">Select</div>
<svg class="abs" style="left:1468.0px;top:192.0px;" width="6" height="3.5" viewBox="0 0 6 3.5"><path d="M0 0 H6 L3.0 3.0 Z" fill="#555"/></svg>
<div class="t" style="left:1428.0px;top:215.8px;font-size:13.5px;line-height:18px;color:#5e5e5e;letter-spacing:-0.297px;">Editing</div>
<svg class="abs" style="left:1555px;top:138px;" width="25" height="26" viewBox="0 0 25 26"><path d="M8.5 18.5 H4 Q1.5 18.5 1.5 16 V4 Q1.5 1.5 4 1.5 H11.5 L17 7 V9" fill="none" stroke="#1a6fe0" stroke-width="1.9" stroke-linejoin="round"/><path d="M11 2 V7.5 H16.5" fill="none" stroke="#1a6fe0" stroke-width="1.7"/><path d="M13 18 H11 V24 H23 V18 H21" fill="none" stroke="#1a6fe0" stroke-width="1.9" stroke-linejoin="round"/><path d="M17 20.5 V12.5 M14 15 L17 12 L20 15" fill="none" stroke="#1a6fe0" stroke-width="1.9" stroke-linejoin="round"/></svg>
<div class="t" style="left:1509.0px;top:172.5px;font-size:15.5px;line-height:20px;color:#3b3b3b;letter-spacing:-0.624px;">Create and Share</div>
<div class="t" style="left:1528.0px;top:192.0px;font-size:15.5px;line-height:20px;color:#3b3b3b;letter-spacing:-0.641px;">Adobe PDF</div>
<div class="t" style="left:1521.0px;top:215.8px;font-size:13.5px;line-height:18px;color:#5e5e5e;letter-spacing:0.036px;">Adobe Acrobat</div>
<svg class="abs" style="left:1896px;top:220px;" width="12" height="8" viewBox="0 0 12 8"><path d="M1.2 6.5 L6 1.7 L10.8 6.5" fill="none" stroke="#555" stroke-width="1.4"/></svg>
<!-- ppt_body -->
<div class="abs" style="left:0px;top:235px;width:1919px;height:820px;background:#e6e6e8;"></div>
<div class="t" style="left:14.5px;top:251.5px;font-size:19px;line-height:25px;color:#c8472b;">1</div>
<svg class="abs" style="left:13px;top:277px;" width="12" height="12" viewBox="0 0 12 12"><path d="M6 0.5 L7.4 4.4 H11.6 L8.2 6.9 L9.5 11 L6 8.5 L2.5 11 L3.8 6.9 L0.4 4.4 H4.6 Z" fill="#6b6b6b"/><path d="M0 6 H2.2" stroke="#8a8a8a" stroke-width="1"/></svg>
<div class="t" style="left:13.5px;top:440.5px;font-size:19px;line-height:25px;color:#555;">2</div>
<svg class="abs" style="left:13px;top:466px;" width="12" height="12" viewBox="0 0 12 12"><path d="M6 0.5 L7.4 4.4 H11.6 L8.2 6.9 L9.5 11 L6 8.5 L2.5 11 L3.8 6.9 L0.4 4.4 H4.6 Z" fill="#6b6b6b"/><path d="M0 6 H2.2" stroke="#8a8a8a" stroke-width="1"/></svg>
<div class="t" style="left:13.5px;top:629.5px;font-size:19px;line-height:25px;color:#555;">3</div>
<svg class="abs" style="left:13px;top:655px;" width="12" height="12" viewBox="0 0 12 12"><path d="M6 0.5 L7.4 4.4 H11.6 L8.2 6.9 L9.5 11 L6 8.5 L2.5 11 L3.8 6.9 L0.4 4.4 H4.6 Z" fill="#6b6b6b"/><path d="M0 6 H2.2" stroke="#8a8a8a" stroke-width="1"/></svg>
<div class="t" style="left:13.5px;top:818.5px;font-size:19px;line-height:25px;color:#555;">4</div>
<svg class="abs" style="left:13px;top:844px;" width="12" height="12" viewBox="0 0 12 12"><path d="M6 0.5 L7.4 4.4 H11.6 L8.2 6.9 L9.5 11 L6 8.5 L2.5 11 L3.8 6.9 L0.4 4.4 H4.6 Z" fill="#6b6b6b"/><path d="M0 6 H2.2" stroke="#8a8a8a" stroke-width="1"/></svg>
<div class="t" style="left:13.5px;top:1007.5px;font-size:19px;line-height:25px;color:#555;">5</div>
<svg class="abs" style="left:13px;top:1033px;" width="12" height="12" viewBox="0 0 12 12"><path d="M6 0.5 L7.4 4.4 H11.6 L8.2 6.9 L9.5 11 L6 8.5 L2.5 11 L3.8 6.9 L0.4 4.4 H4.6 Z" fill="#6b6b6b"/><path d="M0 6 H2.2" stroke="#8a8a8a" stroke-width="1"/></svg>
<div class="abs" style="left:31px;top:256px;width:295px;height:170px;background:#f5ece7;border:3px solid #c8472b"></div>
<div class="abs" style="left:33px;top:448px;width:292px;height:164px;background:#f5ece7;border:1px solid #d2d0d2"></div>
<div class="abs" style="left:33px;top:637px;width:292px;height:164px;background:#f5ece7;border:1px solid #d2d0d2"></div>
<div class="abs" style="left:33px;top:826px;width:292px;height:164px;background:#f5ece7;border:1px solid #d2d0d2"></div>
<div class="abs" style="left:33px;top:1015px;width:292px;height:40px;background:#f8efea;border:1px solid #d2d0d2;border-bottom:none"></div>
<div class="t" style="left:79.0px;top:1022.5px;font-size:9.5px;line-height:12px;color:#2e2624;font-family:'Liberation Serif',serif;letter-spacing:0.432px;">Теоретические основы адаптивного обучения</div>
<div class="t" style="left:45.0px;top:1045.5px;font-size:5.6px;line-height:7px;color:#2e2624;font-weight:700;letter-spacing:0.043px;">Междисциплинарная природа</div>
<div class="t" style="left:242.5px;top:1042.5px;font-size:5.6px;line-height:7px;color:#2e2624;font-weight:700;letter-spacing:-0.071px;">Питер Брусиловский</div>
<div class="abs" style="left:246px;top:1054px;width:53px;height:1px;background:#b02a8a;"></div>
<div class="abs" style="left:350.3px;top:237px;width:18.4px;height:817px;background:#dddbdd;"></div>
<div class="abs" style="left:350.3px;top:237.5px;width:18.4px;height:18px;background:#fff;border:1px solid #c6c4c6"></div>
<svg class="abs" style="left:354px;top:243px;" width="10" height="6" viewBox="0 0 10 6"><path d="M0.5 5.5 L5 1 L9.5 5.5 Z" fill="#6a6a6a"/></svg>
<div class="abs" style="left:350.3px;top:256px;width:18.4px;height:82px;background:#fff;border:1px solid #c6c4c6"></div>
<div class="abs" style="left:350.3px;top:1034.5px;width:18.4px;height:18px;background:#fff;border:1px solid #c6c4c6"></div>
<svg class="abs" style="left:354px;top:1041px;" width="10" height="6" viewBox="0 0 10 6"><path d="M0.5 0.5 L5 5 L9.5 0.5 Z" fill="#6a6a6a"/></svg>
<div class="abs" style="left:373px;top:236px;width:1px;height:819px;background:#c6c4c6;"></div>
<div class="abs" style="left:376px;top:1009px;width:1543px;height:1px;background:#c9c7c9;"></div>
<div class="t" style="left:388.0px;top:1017.5px;font-size:18px;line-height:23px;color:#595959;letter-spacing:0.113px;">Click to add notes</div>
<div class="abs" style="left:1900px;top:237px;width:19px;height:703px;background:#dddbdd;"></div>
<div class="abs" style="left:1900.5px;top:237.5px;width:18.5px;height:18px;background:#fff;border:1px solid #c6c4c6"></div>
<svg class="abs" style="left:1905px;top:243px;" width="10" height="6" viewBox="0 0 10 6"><path d="M0.5 5.5 L5 1 L9.5 5.5 Z" fill="#6a6a6a"/></svg>
<div class="abs" style="left:1900.5px;top:272.5px;width:18.5px;height:20px;background:#fff;border:1px solid #c6c4c6"></div>
<div class="abs" style="left:1900.5px;top:922.5px;width:18.5px;height:18px;background:#fff;border:1px solid #c6c4c6"></div>
<svg class="abs" style="left:1905px;top:929px;" width="10" height="6" viewBox="0 0 10 6"><path d="M0.5 0.5 L5 5 L9.5 0.5 Z" fill="#6a6a6a"/></svg>
<svg class="abs" style="left:1904px;top:947px;" width="11" height="11" viewBox="0 0 11 11"><path d="M0.5 5 L5.5 0.5 L10.5 5 Z M0.5 10.5 L5.5 6 L10.5 10.5 Z" fill="#6a6a6a"/></svg>
<svg class="abs" style="left:1904px;top:968px;" width="11" height="11" viewBox="0 0 11 11"><path d="M0.5 0.5 L5.5 5 L10.5 0.5 Z M0.5 6 L5.5 10.5 L10.5 6 Z" fill="#6a6a6a"/></svg>
<div class="abs" style="left:0px;top:1055px;width:1919px;height:27px;background:#f3f1f3;border-top:1px solid #c9c7c9"></div>
<div class="t" style="left:8.0px;top:1060.0px;font-size:13px;line-height:17px;color:#5a5a5a;letter-spacing:-0.023px;">Slide 1 of 41</div>
<svg class="abs" style="left:100px;top:1060px;" width="18" height="16" viewBox="0 0 18 16"><path d="M1 1 H8 V13 H1 Z M8 1 H16 V13 H8 M8 13 V15.5" fill="none" stroke="#5a5a5a" stroke-width="1"/><path d="M11 3.5 L15 7.5 M15 3.5 L11 7.5" stroke="#5a5a5a" stroke-width="1.2"/></svg>
<svg class="abs" style="left:1335px;top:1061px;" width="14" height="13" viewBox="0 0 14 13"><path d="M7 0.5 L10 4 H4 Z" fill="#5a5a5a"/><path d="M1 6 H13 M1 9 H13 M1 12 H9" stroke="#5a5a5a" stroke-width="1"/></svg>
<div class="t" style="left:1354.0px;top:1060.0px;font-size:13px;line-height:17px;color:#5a5a5a;letter-spacing:0.135px;">Notes</div>
<svg class="abs" style="left:1410px;top:1061px;" width="15" height="14" viewBox="0 0 15 14"><path d="M0.5 0.5 H14.5 V9.5 H7 L3.5 13 V9.5 H0.5 Z" fill="#5a5a5a"/></svg>
<div class="t" style="left:1430.5px;top:1060.0px;font-size:13px;line-height:17px;color:#5a5a5a;letter-spacing:-0.264px;">Comments</div>
<div class="abs" style="left:1512px;top:1056px;width:41px;height:26px;background:#c9c7c9;"></div>
<svg class="abs" style="left:1524px;top:1061px;" width="17" height="14" viewBox="0 0 17 14"><rect x="0.5" y="0.5" width="16" height="13" fill="none" stroke="#5a5a5a" stroke-width="1"/><path d="M4.5 0.5 V13.5 M4.5 9.5 H16.5" stroke="#5a5a5a" stroke-width="1"/><rect x="6.5" y="2.5" width="8" height="5" fill="none" stroke="#5a5a5a" stroke-width="1"/></svg>
<svg class="abs" style="left:1566px;top:1061px;" width="15" height="14" viewBox="0 0 15 14"><rect x="0.5" y="0.5" width="5.5" height="5" fill="none" stroke="#5a5a5a"/><rect x="9" y="0.5" width="5.5" height="5" fill="none" stroke="#5a5a5a"/><rect x="0.5" y="8.5" width="5.5" height="5" fill="none" stroke="#5a5a5a"/><rect x="9" y="8.5" width="5.5" height="5" fill="none" stroke="#5a5a5a"/></svg>
<svg class="abs" style="left:1607px;top:1061px;" width="15" height="14" viewBox="0 0 15 14"><path d="M7.5 1.5 C5 0 2.5 0 0.5 1 V12.5 C2.5 11.5 5 11.5 7.5 13 C10 11.5 12.5 11.5 14.5 12.5 V1 C12.5 0 10 0 7.5 1.5 Z M7.5 1.5 V13" fill="none" stroke="#5a5a5a" stroke-width="1"/><path d="M2.5 3.5 H5.5 M2.5 5.5 H5.5 M2.5 7.5 H5.5 M2.5 9.5 H5.5 M9.5 3.5 H12.5 M9.5 5.5 H12.5 M9.5 7.5 H12.5 M9.5 9.5 H12.5" stroke="#5a5a5a" stroke-width="0.8"/></svg>
<svg class="abs" style="left:1647px;top:1061px;" width="15" height="15" viewBox="0 0 15 15"><path d="M0 1 H15" stroke="#5a5a5a" stroke-width="1.4"/><rect x="1.5" y="1.5" width="12" height="7" fill="none" stroke="#5a5a5a" stroke-width="1"/><path d="M7.5 8.5 V13 M4 14 H11" stroke="#5a5a5a" stroke-width="1"/></svg>
<div class="abs" style="left:1681px;top:1067.5px;width:9px;height:1.6px;background:#5a5a5a;"></div>
<div class="abs" style="left:1694px;top:1068px;width:125px;height:1px;background:#8a8a8a;"></div>
<div class="abs" style="left:1756.5px;top:1061.5px;width:4.5px;height:14px;background:#5a5a5a;"></div>
<div class="abs" style="left:1824px;top:1067.5px;width:10.5px;height:1.6px;background:#5a5a5a;"></div>
<div class="abs" style="left:1828.5px;top:1063px;width:1.6px;height:10.5px;background:#5a5a5a;"></div>
<div class="t" style="left:1851.5px;top:1060.0px;font-size:13px;line-height:17px;color:#5a5a5a;letter-spacing:-0.595px;">110%</div>
<svg class="abs" style="left:1898px;top:1061px;" width="15" height="15" viewBox="0 0 15 15"><rect x="0.5" y="0.5" width="14" height="14" fill="none" stroke="#5a5a5a" stroke-width="1"/><path d="M7.5 2 V13 M2 7.5 H13 M6 3.8 L7.5 2 L9 3.8 M6 11.2 L7.5 13 L9 11.2 M3.8 6 L2 7.5 L3.8 9 M11.2 6 L13 7.5 L11.2 9" fill="none" stroke="#5a5a5a" stroke-width="0.9"/></svg>
<!-- slide -->
<div class="abs" style="left:376px;top:235px;width:1523px;height:774px;overflow:hidden">
<div class="abs" style="left:101px;top:14px;width:1322px;height:745px;background:#f5ece7;border:1px solid #cccacc"></div>
<svg class="abs" style="left:0;top:0" width="1523" height="774" viewBox="376 235 1523 774"><g transform="translate(440,230) scale(0.25)"><path d="M45 1042 L135 920 Q150 898 176 905 L430 982 Q462 992 462 1026 L458 1175 Z" fill="#b87a45"/><path d="M203 900 L268 812 Q280 795 300 800 L400 828 Q422 836 420 858 L414 975 Z" fill="#b87a45"/><path d="M212 897 L415 940 L412 978 L200 910 Z" fill="#33261f"/><path d="M345 688 L432 712 L392 825 L308 800 Z" fill="#b87a45"/><path d="M313 787 L400 797 L390 827 L306 805 Z" fill="#33261f"/><path d="M352 662 L438 697 L428 716 L342 690 Z" fill="#33261f"/><path d="M688.7 12 A363.5 363.5 0 1 1 185 497.3" fill="none" stroke="#33261f" stroke-width="27"/><path d="M700 62 L722 32 M284 604 L303 578" stroke="#33261f" stroke-width="7"/><clipPath id="gc"><circle cx="505" cy="325" r="325"/></clipPath><circle cx="505" cy="325" r="325" fill="#94bbd1"/><g clip-path="url(#gc)" fill="#e8d986"><path d="M150 160 L232 152 L300 160 L330 148 L400 137 L420 180 L445 213 L500 205 L518 170 L530 125 L520 90 L490 75 L482 45 L470 25 L430 10 L300 -20 L150 60 Z"/><path d="M490 0 L510 50 L535 85 L545 110 L548 160 L560 155 L565 110 L580 100 L600 70 L597 0 Z"/><path d="M615 0 L622 35 L640 65 L670 40 L650 0 Z"/><path d="M740 110 L765 130 L800 175 L815 205 L760 220 L700 215 L700 195 L735 175 L745 140 Z"/><path d="M770 230 L800 250 L822 238 L835 280 L800 285 L790 300 L770 285 L750 265 L775 255 Z"/><path d="M660 290 L690 280 L730 280 L745 295 L765 300 L770 320 L745 330 L735 350 L750 375 L780 380 L800 355 L800 320 L815 315 L828 285 L860 300 L860 560 L740 560 L715 555 L680 545 L650 548 L640 535 L610 525 L580 490 L555 470 L535 450 L548 455 L575 470 L600 495 L625 500 L640 480 L638 455 L620 440 L600 435 L630 420 L650 390 L660 350 L658 320 L685 325 L690 305 L670 300 Z"/><path d="M415 310 L435 325 L450 350 L480 360 L500 385 L530 405 L545 430 L535 450 L520 455 L500 480 L470 478 L440 462 L410 462 L370 475 L330 490 L290 500 L255 505 L290 480 L320 462 L330 430 L345 400 L370 385 L375 350 L395 330 Z"/></g></g><path d="M896 432.4 L1010 432.4 C1025 433 1037.5 445 1037.5 462 C1037.5 480 1028 496 1015 510 C1000 528 975 545 953 563.5 C935 580 915 600 899.5 624.5 L832.5 624.5 C836 600 850 578 872 552.4 C890 535 905 522 921 506.5 L934 462 Z" fill="#fff"/><g transform="translate(680,310) scale(0.2)"><path d="M340 150 C260 190 100 330 92 440 C88 520 140 556 200 555 L740 555 L870 510 C800 580 640 690 500 790 C400 870 360 930 372 990 C385 1050 440 1078 520 1075 L930 1075 L1200 980 L1266 820 L1200 650 L1290 605 C1400 540 1520 420 1542 300 C1560 170 1490 95 1400 90 L740 90 C600 95 480 230 420 350 C380 340 330 280 340 150 Z" fill="#fff"/><path d="M192 555 C300 525 370 425 420 350 C480 250 600 95 740 90 C860 95 930 200 928 320 C925 420 890 490 870 510 C830 545 780 555 740 555 Z" fill="#807e52"/><path d="M506 1075 C640 1052 720 935 790 830 C860 730 960 620 1080 612 C1200 620 1268 720 1266 820 C1264 900 1230 950 1200 980 C1130 1050 1020 1075 930 1075 Z" fill="#807e52"/><path d="M928 182 H1278" stroke="#33261f" stroke-width="6"/><path d="M945 218 H1508" stroke="#33261f" stroke-width="6"/><path d="M955 268 H1513" stroke="#33261f" stroke-width="6"/><path d="M960 318 H1507" stroke="#33261f" stroke-width="6"/><path d="M955 368 H1488" stroke="#33261f" stroke-width="6"/><path d="M945 418 H1100" stroke="#33261f" stroke-width="6"/><path d="M1125 607 H1280" stroke="#33261f" stroke-width="6"/><path d="M1238 645 H1602" stroke="#33261f" stroke-width="6"/><path d="M1278 703 H1740" stroke="#33261f" stroke-width="6"/><path d="M1298 762 H1752" stroke="#33261f" stroke-width="6"/><path d="M1300 822 H1575" stroke="#33261f" stroke-width="6"/></g><path d="M934.9 495.7 H984.8" stroke="#33261f" stroke-width="1.3"/><path d="M929.7 506.1 H972.1" stroke="#33261f" stroke-width="1.3"/><path d="M923 515 H964.2" stroke="#33261f" stroke-width="1.3"/><path d="M915.9 522.3 H959.5" stroke="#33261f" stroke-width="1.3"/><path d="M908 529.9 H956.3" stroke="#33261f" stroke-width="1.3"/><path d="M889.4 546.1 H951.5" stroke="#33261f" stroke-width="1.3"/><path d="M881.5 554.2 H918.3" stroke="#33261f" stroke-width="1.3"/><path d="M875.2 560.6 H936.5" stroke="#33261f" stroke-width="1.3"/><path d="M867.5 568.9 H928.1" stroke="#33261f" stroke-width="1.3"/><path d="M860.9 577.3 H920.2" stroke="#33261f" stroke-width="1.3"/><path d="M855.2 585.7 H913.5" stroke="#33261f" stroke-width="1.3"/><path d="M850.1 593.9 H894.8" stroke="#33261f" stroke-width="1.3"/><circle cx="1026" cy="558" r="74.5" fill="#fcc3a0"/><path d="M962 594 L938.9 637.2 L984 616 Z" fill="#fcc3a0"/><g stroke="#c46a6a" stroke-width="4.8" stroke-linecap="round"><path d="M1026.5 509.5 V524.5"/><path d="M1003.6 515.5 L1011.6 528.3"/><path d="M1049.6 515.5 L1041.6 528.3"/><path d="M987.5 532.3 L1000.4 539.5"/><path d="M1065.3 532.3 L1052.7 539.5"/><path d="M981.5 554.5 H996.5"/><path d="M1056.3 554.5 H1071.5"/></g><path d="M1016 588 C1014 575 1003 568 1003 554 A23.5 23.5 0 0 1 1050 554 C1050 568 1040 575 1038 588 Z" fill="#c46a6a"/><path d="M1016 588 H1038 V599 Q1038 606 1027 606 Q1016 606 1016 599 Z" fill="#33261f"/><path d="M1012.5 562 C1017 563 1017.5 553 1015.5 553 C1013.5 553 1015 563 1019.5 562 C1024 563 1024.5 553 1022.5 553 C1020.5 553 1022 563 1026.5 562 C1031 563 1031.5 553 1029.5 553 C1027.5 553 1029 563 1033.5 562 C1038 563 1038.5 553 1036.5 553 C1034.5 553 1036 563 1040.5 562" fill="none" stroke="#fff" stroke-width="1.1"/><path d="M598 630 L652 630 L652 716 Q640 718 612 716 Z" fill="#e8d986"/><path d="M590.5 632.5 C599 628.5 608 633 609.6 641 L624 712 Q625 717 620 717 L600 717 Q596.5 717 595.5 712 L582.3 648 C580.8 640 584.5 635 590.5 632.5 Z" fill="#fff"/><path d="M589 645 Q591.8 639.5 596.6 644.5 L609.5 690 L623.5 745 L612.5 748 L598.3 690 Z" fill="#33261f"/><g transform="translate(570,690) scale(0.25)"><rect x="212" y="258" width="440" height="118" rx="45" fill="#e8d986"/><path d="M150 100 L195 225 C215 300 250 365 330 372 L640 372" fill="none" stroke="#33261f" stroke-width="44"/><path d="M275 372 L185 895" stroke="#33261f" stroke-width="40"/><path d="M520 410 L440 895" stroke="#33261f" stroke-width="40"/><path d="M622 410 L702 895" stroke="#33261f" stroke-width="38"/><path d="M500 430 C510 390 540 385 570 385 C600 385 630 390 640 430" fill="none" stroke="#33261f" stroke-width="40"/><path d="M815 100 L950 895" stroke="#33261f" stroke-width="40"/><path d="M820 55 C920 65 965 130 990 190 L1108 470 C1080 482 1050 468 1000 440 C960 402 930 410 912 418 L835 210 Z" fill="#33261f"/><path d="M912 418 C960 400 1000 440 1050 466 Q1082 480 1106 470 L1172 622 Q1180 647 1158 647 L1000 647 Q985 647 984 630 Z" fill="#ae592b"/><path d="M996 608 H1152" stroke="#fff" stroke-width="3.5"/><path d="M752 672 L872 672 C880 720 890 760 905 790 L900 868 L762 868 C745 840 753 800 770 780 C765 740 758 700 752 672 Z" fill="#fdc9a8"/><path d="M1040 645 L1160 645 C1180 690 1200 730 1215 770 L1232 868 L1120 868 C1105 830 1108 800 1120 780 C1090 730 1060 690 1040 645 Z" fill="#fdc9a8"/><path d="M752 672 L872 672 L876 700 L758 700 Z" fill="#f3b794"/><path d="M1040 645 L1160 645 L1172 670 L1052 670 Z" fill="#f3b794"/><path d="M852 870 C850 820 880 780 930 775 C990 775 1040 820 1048 870 L1050 895 L752 895 L752 868 Z" fill="#33261f"/><path d="M1195 870 C1200 820 1235 778 1280 775 C1340 790 1395 835 1402 870 L1407 895 L1105 895 L1105 868 Z" fill="#33261f"/><path d="M262 120 C270 190 330 185 400 160 L480 115 L520 60 L262 60 Z" fill="#33261f"/><path d="M262 150 C270 230 340 275 420 272 L600 275 C640 400 670 540 690 655 Q692 675 708 675 L868 675 Q884 675 882 655 C870 520 850 380 835 200 C830 130 800 92 760 92 L520 92 C440 130 330 175 262 150 Z" fill="#ae592b"/><path d="M708 633 H868" stroke="#fff" stroke-width="3.5"/><path d="M410 140 C500 170 600 185 640 200 C660 240 655 300 668 340 C690 420 720 500 725 592 M620 235 C640 200 660 185 680 180 M640 240 C660 222 680 216 695 214" fill="none" stroke="#33261f" stroke-width="4"/><path d="M250 -20 L250 60 C255 110 262 135 300 132 C370 128 430 115 480 90 L530 55 L530 -20 Z" fill="#c56869"/><path d="M292 10 C320 30 350 25 378 12" fill="none" stroke="#33261f" stroke-width="3"/></g><g transform="translate(570,490) scale(0.18769)"><path d="M805 320 L740 425 L690 420 L760 510 L850 540 L930 505 L955 465 L1005 430 L900 440 Z" fill="#fdc9a8"/><path d="M806 371 C830 410 860 432 938 464 L895 482 C860 470 840 440 826 416 Z" fill="#f6bc9b"/><path d="M500 470 C520 430 600 402 690 420 C740 500 880 565 950 462 C990 450 1030 468 1048 492 L1150 660 L1078 702 C1020 760 930 830 882 880 C870 940 868 1000 860 1060 L700 1100 L694 1080 L692 1085 L335 1085 C330 1050 400 900 440 700 C460 600 480 520 500 470 Z" fill="#c56869"/><path d="M478 682 L522 668 L528 712 Z" fill="#33261f"/><path d="M1078 702 L1150 660 L1100 714 Z" fill="#33261f"/><path d="M948 812 L1078 700 C1100 780 1130 880 1150 950 C1200 980 1270 1000 1312 1022 L1300 1062 L1080 1062 C1040 1000 1000 920 948 812 Z" fill="#fdc9a8"/><path d="M948 812 L1040 732 C1010 790 990 830 975 870 Z" fill="#f3b794"/><path d="M520 672 L705 690 C720 760 740 860 750 940 C800 960 880 980 940 1010 L1078 1060 L1060 1078 L900 1078 C800 1078 700 1062 650 1030 C620 980 560 800 520 672 Z" fill="#fdc9a8"/><g fill="none" stroke="#33261f" stroke-width="6.5" stroke-linecap="round"><path d="M695 502 C720 540 780 580 890 605"/><path d="M752 482 L800 515"/><path d="M668 522 C680 600 695 650 705 688"/><path d="M1035 600 C1010 630 990 670 976 702"/><path d="M483 560 C470 600 480 640 470 682"/><path d="M400 1020 C430 1070 520 1060 610 1020"/><path d="M385 1075 C410 1115 460 1100 500 1085"/><path d="M940 1020 L965 1058 M975 1020 L1000 1058 M1010 1020 L1035 1058 M1040 1020 L1068 1055"/></g><g fill="none" stroke="#33261f" stroke-linecap="round"><path d="M682 962 C700 940 720 938 742 936" stroke-width="12"/><path d="M872 1010 C880 992 895 988 912 985" stroke-width="8"/><path d="M1106 975 C1115 962 1130 960 1146 958" stroke-width="7"/></g><path d="M790 260 C785 300 800 330 830 380 C870 430 950 452 1000 425 C1040 400 1050 340 1062 300 C1040 270 1000 230 975 195 C940 230 890 250 850 258 C835 235 795 235 790 260 Z" fill="#fdc9a8"/><path d="M718 215 C725 110 800 52 880 84 C895 92 900 100 960 88 C1050 82 1122 160 1126 250 C1126 300 1100 326 1070 330 C1050 290 1010 250 975 195 C940 232 890 252 850 260 C832 232 792 234 789 270 C786 300 798 320 812 326 C790 352 760 372 730 371 C690 368 664 340 650 310 C690 312 712 280 718 215 Z" fill="#33261f"/><circle cx="938" cy="298" r="11" fill="#33261f"/><circle cx="1010" cy="332" r="11" fill="#33261f"/><g fill="none" stroke="#33261f" stroke-width="6.5" stroke-linecap="round"><path d="M935 262 C950 262 960 270 968 282"/><path d="M1000 304 C1010 298 1022 297 1032 302"/><path d="M985 305 C985 330 975 350 968 362 C962 366 955 365 950 361"/><path d="M908 355 C915 378 940 392 962 390"/><path d="M812 258 C825 262 835 275 836 292"/></g></g><g transform="translate(570,690) scale(0.25)"><rect x="890" y="272" width="862" height="31" fill="#fcc3a0"/><path d="M1720 305 L1752 303 L1736 332 Z" fill="#33261f"/><path d="M858 150 L990 895" stroke="#fff" stroke-width="20"/><path d="M352 895 L462 150 C470 100 490 75 540 75 L770 75 C815 75 835 100 845 150 L972 895" fill="none" stroke="#b87a45" stroke-width="30"/><path d="M1722 150 L1848 895" stroke="#fff" stroke-width="20"/><path d="M1215 895 L1335 150 C1345 95 1365 72 1410 72 L1640 72 C1685 72 1700 95 1710 150 L1835 895" fill="none" stroke="#b87a45" stroke-width="30"/><rect x="888" y="17" width="860" height="38" fill="#fff"/><rect x="448" y="17" width="440" height="38" fill="#b87a45"/></g><g transform="translate(570,490) scale(0.18769)"><path d="M1390 715 L1785 715 Q1803 715 1800 733 L1752 1070 Q1750 1082 1736 1082 L1300 1082 L1375 728 Q1378 715 1390 715 Z" fill="#94bbd1"/><path d="M1380 728 L1325 1058 L1726 1063" fill="none" stroke="#33261f" stroke-width="4"/><circle cx="1573" cy="888" r="40" fill="#fff"/><rect x="905" y="1061" width="396" height="25" rx="12" fill="#33261f"/></g><path d="M613 454.5 C615.56 466.488 618.632 470.04 629.0 473 C618.632 475.96 615.56 479.512 613 491.5 C610.44 479.512 607.368 475.96 597.0 473 C607.368 470.04 610.44 466.488 613 454.5 Z" fill="#94bbd1"/><path d="M644.5 492.0 C647.06 503.988 650.132 507.54 660.5 510.5 C650.132 513.46 647.06 517.012 644.5 529.0 C641.94 517.012 638.868 513.46 628.5 510.5 C638.868 507.54 641.94 503.988 644.5 492.0 Z" fill="#94bbd1"/><path d="M1107 308.5 C1109.56 320.488 1112.632 324.04 1123.0 327 C1112.632 329.96 1109.56 333.512 1107 345.5 C1104.44 333.512 1101.368 329.96 1091.0 327 C1101.368 324.04 1104.44 320.488 1107 308.5 Z" fill="#94bbd1"/><path d="M1085.5 824.5 C1088.06 836.488 1091.132 840.04 1101.5 843 C1091.132 845.96 1088.06 849.512 1085.5 861.5 C1082.94 849.512 1079.868 845.96 1069.5 843 C1079.868 840.04 1082.94 836.488 1085.5 824.5 Z" fill="#94bbd1"/><path d="M544.5 945.5 C547.06 957.488 550.132 961.04 560.5 964 C550.132 966.96 547.06 970.512 544.5 982.5 C541.94 970.512 538.868 966.96 528.5 964 C538.868 961.04 541.94 957.488 544.5 945.5 Z" fill="#94bbd1"/><path d="M1185.5 743.6 H1623" stroke="#33261f" stroke-width="1.3"/><path d="M1390.0 792.4 L1391.5 794.4 L1393.0 792.4 L1394.5 794.4 L1396.0 792.4 L1397.5 794.4 L1399.0 792.4 L1400.5 794.4 L1402.0 792.4 L1403.5 794.4 L1405.0 792.4 L1406.5 794.4 L1408.0 792.4 L1409.5 794.4 L1411.0 792.4 L1412.5 794.4 L1414.0 792.4 L1415.5 794.4 L1417.0 792.4 L1418.5 794.4 L1420.0 792.4 L1421.5 794.4 L1423.0 792.4 L1424.5 794.4 L1426.0 792.4 L1427.5 794.4 L1429.0 792.4 L1430.5 794.4 L1432.0 792.4 L1433.5 794.4 L1435.0 792.4 L1436.5 794.4 L1438.0 792.4 L1439.5 794.4 L1441.0 792.4 L1442.5 794.4 L1444.0 792.4 L1445.5 794.4 L1447.0 792.4 L1448.5 794.4 L1450.0 792.4 L1451.5 794.4 L1453.0 792.4 L1454.5 794.4 L1456.0 792.4 L1457.5 794.4 L1459.0 792.4 L1460.5 794.4 L1462.0 792.4 L1463.5 794.4 L1465.0 792.4 L1466.5 794.4 L1468.0 792.4 L1469.5 794.4 L1471.0 792.4 L1472.5 794.4 L1474.0 792.4 L1475.5 794.4 L1477.0 792.4 L1478.5 794.4 L1480.0 792.4 L1481.5 794.4 L1483.0 792.4 L1484.5 794.4 L1486.0 792.4 L1487.5 794.4 L1489.0 792.4 L1490.5 794.4 L1492.0 792.4 L1493.5 794.4 L1495.0 792.4 L1496.5 794.4 L1498.0 792.4 L1499.5 794.4 L1501.0 792.4 L1502.5 794.4 L1504.0 792.4 L1505.5 794.4 L1507.0 792.4 L1508.5 794.4 L1510.0 792.4 L1511.5 794.4 L1513.0 792.4 L1514.5 794.4 L1516.0 792.4 L1517.5 794.4 L1519.0 792.4 L1520.5 794.4 L1522.0 792.4 L1523.5 794.4 L1525.0 792.4 L1526.5 794.4 L1528.0 792.4 L1529.5 794.4 L1531.0 792.4 L1532.5 794.4 L1534.0 792.4 L1535.5 794.4 L1537.0 792.4 L1538.5 794.4 L1540.0 792.4 L1541.5 794.4 L1543.0 792.4 L1544.5 794.4 L1546.0 792.4 L1547.5 794.4 L1549.0 792.4 L1550.5 794.4 L1552.0 792.4 L1553.5 794.4 L1555.0 792.4 L1556.5 794.4 L1558.0 792.4 L1559.5 794.4 L1561.0 792.4 L1562.5 794.4" fill="none" stroke="#e0302e" stroke-width="1"/></svg>
</div>
<div class="t" style="left:1203.0px;top:393.1px;font-size:39.5px;line-height:43.9px;color:#b05a2e;font-weight:700;font-family:'Liberation Serif',serif;letter-spacing:-0.379px;-webkit-text-stroke:0.35px #b05a2e;">Адаптивное и</div>
<div class="t" style="left:1203.0px;top:437.0px;font-size:39.5px;line-height:43.9px;color:#b05a2e;font-weight:700;font-family:'Liberation Serif',serif;letter-spacing:0.385px;-webkit-text-stroke:0.35px #b05a2e;">персонализированное</div>
<div class="t" style="left:1203.0px;top:480.9px;font-size:39.5px;line-height:43.9px;color:#b05a2e;font-weight:700;font-family:'Liberation Serif',serif;letter-spacing:0.322px;-webkit-text-stroke:0.35px #b05a2e;">обучение на основе</div>
<div class="t" style="left:1203.0px;top:524.8px;font-size:39.5px;line-height:43.9px;color:#b05a2e;font-weight:700;font-family:'Liberation Serif',serif;letter-spacing:0.069px;-webkit-text-stroke:0.35px #b05a2e;">цифровых образовательных</div>
<div class="t" style="left:1203.0px;top:568.7px;font-size:39.5px;line-height:43.9px;color:#b05a2e;font-weight:700;font-family:'Liberation Serif',serif;letter-spacing:-0.057px;-webkit-text-stroke:0.35px #b05a2e;">платформ: новые горизонты</div>
<div class="t" style="left:1203.0px;top:612.6px;font-size:39.5px;line-height:43.9px;color:#b05a2e;font-weight:700;font-family:'Liberation Serif',serif;letter-spacing:0.280px;-webkit-text-stroke:0.35px #b05a2e;">методики преподавания</div>
<div class="t" style="left:1203.0px;top:656.5px;font-size:39.5px;line-height:43.9px;color:#b05a2e;font-weight:700;font-family:'Liberation Serif',serif;letter-spacing:-0.047px;-webkit-text-stroke:0.35px #b05a2e;">русского языка</div>
<div class="t" style="left:1212.0px;top:762.2px;font-size:26.2px;line-height:35.3px;color:#3a302c;">Григорян В.А., канд.пед.наук,</div>
<div class="t" style="left:1212.0px;top:797.5px;font-size:26.2px;line-height:35.3px;color:#3a302c;">доцент кафедры русского языка и</div>
<div class="t" style="left:1212.0px;top:832.8px;font-size:26.2px;line-height:35.3px;color:#3a302c;">профессиональной коммуникации</div>
<div class="t" style="left:1212.0px;top:868.1px;font-size:26.2px;line-height:35.3px;color:#3a302c;">РАУ</div>
<!-- gallery -->
<div class="abs" style="left:34px;top:161px;width:288px;height:840px;background:#212121;border-radius:5px;box-shadow:0 2px 7px rgba(0,0,0,.5)"></div>
<div class="abs" style="left:34px;top:161px;width:288px;height:34.5px;background:#1c1c1e;border-radius:5px 5px 0 0"></div>
<div class="abs" style="left:45px;top:182px;width:16px;height:4.2px;background:#c4c4c4;border-radius:1.5px"></div>
<div class="abs" style="left:80px;top:176px;width:16px;height:10.5px;background:#c4c4c4;border-radius:2px"></div>
<div class="abs" style="left:115px;top:171px;width:16px;height:6.6px;background:#2d8cff;border-radius:2px"></div>
<div class="abs" style="left:115px;top:180px;width:16px;height:6.6px;background:#2d8cff;border-radius:2px"></div>
<svg class="abs" style="left:148.8px;top:170px;" width="19" height="18" viewBox="0 0 19 18"><rect x="0.0" y="0.0" width="4.8" height="4.8" rx="1.4" fill="#dedede"/><rect x="0.0" y="6.4" width="4.8" height="4.8" rx="1.4" fill="#dedede"/><rect x="0.0" y="12.8" width="4.8" height="4.8" rx="1.4" fill="#dedede"/><rect x="6.6" y="0.0" width="4.8" height="4.8" rx="1.4" fill="#dedede"/><rect x="6.6" y="6.4" width="4.8" height="4.8" rx="1.4" fill="#dedede"/><rect x="6.6" y="12.8" width="4.8" height="4.8" rx="1.4" fill="#dedede"/><rect x="13.2" y="0.0" width="4.8" height="4.8" rx="1.4" fill="#dedede"/><rect x="13.2" y="6.4" width="4.8" height="4.8" rx="1.4" fill="#dedede"/><rect x="13.2" y="12.8" width="4.8" height="4.8" rx="1.4" fill="#dedede"/></svg>
<svg class="abs" style="left:293.5px;top:170.5px;" width="20.5" height="16" viewBox="0 0 20.5 16"><path d="M1.5 0.5 H9.8 V8 H20 V14 Q20 15.5 18.5 15.5 H1.5 Q0 15.5 0 14 V2 Q0 0.5 1.5 0.5 Z" fill="#cfcfcf"/><rect x="11.6" y="0.5" width="8.4" height="5.6" rx="1.3" fill="#cfcfcf"/></svg>
<svg class="abs" style="left:128px;top:225px;" width="100" height="100" viewBox="0 0 100 100"><rect width="100" height="100" fill="#020202"/><circle cx="50" cy="50" r="50" fill="#9b8248"/><path d="M34 39.5 H66.5 V66 Q66.5 79 50.2 79 Q34 79 34 66 Z" fill="#0a0a0a"/><path d="M58.5 30 L66.5 41 H56 Z" fill="#0a0a0a"/><path d="M50 44.5 L57.2 54 H52.8 V66 Q52.8 69.5 50 69.5 Q47.2 69.5 47.2 66 V54 H42.8 Z" fill="#9b8248"/><g transform="translate(33.6,40.2) scale(0.72,1)" font-family="Liberation Sans,sans-serif" font-weight="700" font-size="28.5" fill="#0a0a0a" stroke="#0a0a0a" stroke-width="1.3"><text x="0" y="0">R</text><text x="15.5" y="0">A</text></g><circle cx="64.2" cy="77.6" r="2" fill="#0a0a0a"/></svg>
<div class="abs" style="left:38px;top:330px;width:280px;height:24px;background:#2b2b2d;"></div>
<svg class="abs" style="left:42.5px;top:333.5px;" width="17" height="17" viewBox="0 0 17 17"><rect x="5.6" y="1.5" width="5.8" height="9" rx="2.9" fill="#e8505b"/><path d="M3.2 8 C3.2 13.6 13.8 13.6 13.8 8 M8.5 12.4 V15 M6 15.4 H11" fill="none" stroke="#e8505b" stroke-width="1.3" stroke-linecap="round"/><path d="M1.5 16 L15.5 1" stroke="#2b2b2d" stroke-width="3.2"/><path d="M1.5 16 L15.5 1" stroke="#e8505b" stroke-width="1.3" stroke-linecap="round"/></svg>
<div class="t" style="left:66.0px;top:332.0px;font-size:15.5px;line-height:20px;color:#fff;letter-spacing:-0.009px;">Российско-Армянский университ...</div>
<svg preserveAspectRatio="none" class="abs" style="left:38px;top:357px;outline:1.6px solid #7fb62f;" width="279.8" height="158" viewBox="0 0 282 159.5"><defs><filter id="b6" x="-20%" y="-20%" width="140%" height="140%"><feGaussianBlur stdDeviation="5"/></filter><filter id="b3" x="-20%" y="-20%" width="140%" height="140%"><feGaussianBlur stdDeviation="1.5"/></filter><filter id="b1" x="-20%" y="-20%" width="140%" height="140%"><feGaussianBlur stdDeviation="0.8"/></filter><linearGradient id="bgv" x1="0" x2="1" y1="0" y2="0"><stop offset="0" stop-color="#a4aea6"/><stop offset="0.3" stop-color="#a0a89e"/><stop offset="0.55" stop-color="#888c81"/><stop offset="1" stop-color="#6c7068"/></linearGradient><clipPath id="vc"><rect width="282" height="159.5"/></clipPath></defs><g clip-path="url(#vc)"><rect width="282" height="160" fill="url(#bgv)"/><g filter="url(#b6)"><ellipse cx="40" cy="92" rx="40" ry="38" fill="#bccac8"/><ellipse cx="20" cy="28" rx="22" ry="16" fill="#858c82"/><ellipse cx="62" cy="22" rx="14" ry="13" fill="#b5bdb3"/><ellipse cx="98" cy="40" rx="16" ry="16" fill="#b1b8ad"/><ellipse cx="82" cy="12" rx="12" ry="8" fill="#7f857a"/><ellipse cx="112" cy="85" rx="12" ry="16" fill="#8d9387"/><ellipse cx="250" cy="40" rx="18" ry="22" fill="#6b6f64"/><ellipse cx="228" cy="92" rx="12" ry="18" fill="#8d9185"/><ellipse cx="266" cy="105" rx="14" ry="20" fill="#666a5f"/><ellipse cx="130" cy="18" rx="14" ry="10" fill="#a7ada2"/><ellipse cx="190" cy="10" rx="16" ry="8" fill="#80857a"/><ellipse cx="232" cy="16" rx="10" ry="10" fill="#90958a"/><ellipse cx="60" cy="60" rx="10" ry="12" fill="#98a09a"/></g><g filter="url(#b3)"><path d="M66 162 C74 146 92 134 112 126 L136 116 L196 122 C226 120 250 134 262 150 L270 162 Z" fill="#131415"/><path d="M163 17 C130 18 112 44 110 70 C108 92 116 104 124 108 C128 96 130 80 134 70 L196 62 C202 84 204 104 206 124 C216 110 220 90 217 70 C214 40 196 18 163 17 Z" fill="#a59474"/><path d="M163 17 C136 20 118 40 114 66 C128 58 150 44 176 46 C160 40 150 30 163 17 Z" fill="#ccbf9f"/><path d="M170 20 C196 24 212 46 215 72 C206 60 192 50 176 46 C182 38 180 28 170 20 Z" fill="#8e7f63"/><path d="M134 62 C140 50 160 44 178 47 C192 50 198 60 199 78 C200 100 194 122 180 134 C172 140 158 140 150 134 C136 122 128 96 130 78 C130 72 132 66 134 62 Z" fill="#dccac6"/><path d="M134 62 C146 52 160 50 178 47 C160 44 142 48 134 62 Z" fill="#bda888"/><path d="M140 134 C150 142 180 142 192 130 L196 162 L134 162 Z" fill="#e0cfcb"/><path d="M131 84 C132 104 140 124 152 134 C142 132 132 112 131 84 Z" fill="#b9a6a0"/></g><g filter="url(#b1)"><ellipse cx="148.5" cy="75" rx="7.2" ry="2.4" fill="#3f3537"/><ellipse cx="182" cy="73.6" rx="7.2" ry="2.4" fill="#3f3537"/><path d="M139 69 Q148 65.5 158 68.5 M173 67 Q182 64 192 67.5" stroke="#8d7758" stroke-width="2" fill="none"/><ellipse cx="167.5" cy="104" rx="10.5" ry="3" fill="#6e474e"/><path d="M158 102.5 Q167.5 99 177 102.5" stroke="#a77a80" stroke-width="1.6" fill="none"/><path d="M166 78 L163.5 90 Q167 93.5 172 90.5" fill="none" stroke="#c4aca6" stroke-width="2.2"/><ellipse cx="167" cy="113" rx="10" ry="2.5" fill="#cdb9b4"/><ellipse cx="141" cy="96" rx="6" ry="12" fill="#cdb8b3" opacity=".7"/></g></g></svg>
<div class="abs" style="left:38.5px;top:490.5px;width:136px;height:24px;background:rgba(38,38,38,.62);"></div>
<div class="t" style="left:43.0px;top:493.0px;font-size:15.5px;line-height:20px;color:#fff;letter-spacing:0.130px;">Violetta Grigoryan</div>
<svg class="abs" style="left:128px;top:547px;" width="100" height="100" viewBox="0 0 100 100"><rect width="100" height="100" fill="#020202"/><circle cx="50" cy="50" r="50" fill="#9b8248"/><path d="M34 39.5 H66.5 V66 Q66.5 79 50.2 79 Q34 79 34 66 Z" fill="#0a0a0a"/><path d="M58.5 30 L66.5 41 H56 Z" fill="#0a0a0a"/><path d="M50 44.5 L57.2 54 H52.8 V66 Q52.8 69.5 50 69.5 Q47.2 69.5 47.2 66 V54 H42.8 Z" fill="#9b8248"/><g transform="translate(33.6,40.2) scale(0.72,1)" font-family="Liberation Sans,sans-serif" font-weight="700" font-size="28.5" fill="#0a0a0a" stroke="#0a0a0a" stroke-width="1.3"><text x="0" y="0">R</text><text x="15.5" y="0">A</text></g><circle cx="64.2" cy="77.6" r="2" fill="#0a0a0a"/></svg>
<div class="abs" style="left:38px;top:651px;width:280px;height:24.5px;background:#2b2b2d;"></div>
<svg class="abs" style="left:42.5px;top:655px;" width="17" height="17" viewBox="0 0 17 17"><rect x="5.6" y="1.5" width="5.8" height="9" rx="2.9" fill="#e8505b"/><path d="M3.2 8 C3.2 13.6 13.8 13.6 13.8 8 M8.5 12.4 V15 M6 15.4 H11" fill="none" stroke="#e8505b" stroke-width="1.3" stroke-linecap="round"/><path d="M1.5 16 L15.5 1" stroke="#2b2b2d" stroke-width="3.2"/><path d="M1.5 16 L15.5 1" stroke="#e8505b" stroke-width="1.3" stroke-linecap="round"/></svg>
<div class="t" style="left:66.0px;top:654.0px;font-size:15.5px;line-height:20px;color:#fff;letter-spacing:-0.009px;">Российско-Армянский университ...</div>
<div class="t" style="left:80.5px;top:742.5px;font-size:23px;line-height:30px;color:#fff;font-weight:700;letter-spacing:0.305px;">Mariam  Arshak...</div>
<div class="abs" style="left:38px;top:812.5px;width:164px;height:24.5px;background:#2b2b2d;"></div>
<svg class="abs" style="left:42.5px;top:816.5px;" width="17" height="17" viewBox="0 0 17 17"><rect x="5.6" y="1.5" width="5.8" height="9" rx="2.9" fill="#e8505b"/><path d="M3.2 8 C3.2 13.6 13.8 13.6 13.8 8 M8.5 12.4 V15 M6 15.4 H11" fill="none" stroke="#e8505b" stroke-width="1.3" stroke-linecap="round"/><path d="M1.5 16 L15.5 1" stroke="#2b2b2d" stroke-width="3.2"/><path d="M1.5 16 L15.5 1" stroke="#e8505b" stroke-width="1.3" stroke-linecap="round"/></svg>
<div class="t" style="left:66.0px;top:815.5px;font-size:15.5px;line-height:20px;color:#fff;letter-spacing:0.110px;">Mariam Arshakyan</div>
<div class="abs" style="left:38px;top:837.5px;width:280px;height:1px;background:#262628;"></div>
<svg class="abs" style="left:128px;top:869px;" width="100" height="97" viewBox="0 0 100 97"><defs><filter id="pb"><feGaussianBlur stdDeviation="0.5"/></filter><filter id="pb2"><feGaussianBlur stdDeviation="0.35"/></filter></defs><g filter="url(#pb2)"><rect width="100" height="97" fill="#3b3a33"/><rect x="0.0" y="3.2" width="3" height="16.8" fill="#7f8e8e"/><rect x="3.0" y="7.4" width="2" height="12.6" fill="#b8935f"/><rect x="5.0" y="5.0" width="3" height="15.0" fill="#3a4d44"/><rect x="8.0" y="7.6" width="2.5" height="12.4" fill="#a8b0a6"/><rect x="10.5" y="7.4" width="3.5" height="12.6" fill="#d6c9a6"/><rect x="14.0" y="5.7" width="4" height="14.3" fill="#b8935f"/><rect x="18.0" y="4.8" width="2.5" height="15.2" fill="#3d6e7a"/><rect x="20.5" y="5.0" width="4" height="15.0" fill="#3d6e7a"/><rect x="24.5" y="7.5" width="2.5" height="12.5" fill="#2c4038"/><rect x="27.0" y="5.8" width="3" height="14.2" fill="#b8935f"/><rect x="30.0" y="6.3" width="4" height="13.7" fill="#1b2a36"/><rect x="34.0" y="5.0" width="2" height="15.0" fill="#7a3a3a"/><rect x="36.0" y="7.3" width="3" height="12.7" fill="#d6c9a6"/><rect x="39.0" y="7.5" width="4" height="12.5" fill="#7a3a3a"/><rect x="43.0" y="4.5" width="3.5" height="15.5" fill="#a8b0a6"/><rect x="46.5" y="5.5" width="3" height="14.5" fill="#33638c"/><rect x="49.5" y="6.3" width="3" height="13.7" fill="#1b2a36"/><rect x="52.5" y="7.4" width="2.5" height="12.6" fill="#4d5d4c"/><rect x="55.0" y="5.4" width="4" height="14.6" fill="#c9bc98"/><rect x="59.0" y="6.4" width="3.5" height="13.6" fill="#d6c9a6"/><rect x="62.5" y="5.3" width="2" height="14.7" fill="#1b2a36"/><rect x="64.5" y="7.0" width="3" height="13.0" fill="#d9cfb4"/><rect x="67.5" y="7.6" width="3.5" height="12.4" fill="#d6c9a6"/><rect x="71.0" y="5.0" width="4" height="15.0" fill="#c9bc98"/><rect x="75.0" y="4.5" width="3" height="15.5" fill="#d9cfb4"/><rect x="78.0" y="4.0" width="4" height="16.0" fill="#d6c9a6"/><rect x="82.0" y="3.3" width="2" height="16.7" fill="#d9cfb4"/><rect x="84.0" y="7.5" width="2" height="12.5" fill="#4d5d4c"/><rect x="86.0" y="3.0" width="4" height="17.0" fill="#33638c"/><rect x="90.0" y="4.3" width="3" height="15.7" fill="#1f4650"/><rect x="93.0" y="3.3" width="2" height="16.7" fill="#1f4650"/><rect x="95.0" y="4.9" width="2.5" height="15.1" fill="#d9cfb4"/><rect x="97.5" y="6.7" width="2" height="13.3" fill="#4d5d4c"/><rect x="99.5" y="4.2" width="2.5" height="15.8" fill="#7f8e8e"/><rect x="0.0" y="26.3" width="3.5" height="13.7" fill="#d9cfb4"/><rect x="3.5" y="29.3" width="2" height="10.7" fill="#7f8e8e"/><rect x="5.5" y="28.8" width="4" height="11.2" fill="#2c4038"/><rect x="9.5" y="26.5" width="3.5" height="13.5" fill="#567f86"/><rect x="13.0" y="26.1" width="3.5" height="13.9" fill="#7f8e8e"/><rect x="16.5" y="29.3" width="2.5" height="10.7" fill="#1b2a36"/><rect x="19.0" y="29.0" width="2.5" height="11.0" fill="#e0d6bb"/><rect x="21.5" y="28.0" width="2" height="12.0" fill="#1b2a36"/><rect x="23.5" y="28.8" width="3" height="11.2" fill="#2c4038"/><rect x="26.5" y="27.8" width="3.5" height="12.2" fill="#c9bc98"/><rect x="30.0" y="27.2" width="2.5" height="12.8" fill="#3a4d44"/><rect x="32.5" y="27.4" width="4" height="12.6" fill="#3d6e7a"/><rect x="36.5" y="26.4" width="3.5" height="13.6" fill="#7f8e8e"/><rect x="40.0" y="28.4" width="3.5" height="11.6" fill="#b8935f"/><rect x="43.5" y="27.4" width="3.5" height="12.6" fill="#3d6e7a"/><rect x="47.0" y="29.7" width="2.5" height="10.3" fill="#7a3a3a"/><rect x="49.5" y="29.3" width="3.5" height="10.7" fill="#c9bc98"/><rect x="53.0" y="29.7" width="4" height="10.3" fill="#2f5560"/><rect x="57.0" y="29.3" width="4" height="10.7" fill="#b8935f"/><rect x="61.0" y="27.5" width="3" height="12.5" fill="#d6c9a6"/><rect x="64.0" y="27.5" width="2.5" height="12.5" fill="#2c4038"/><rect x="66.5" y="26.2" width="3" height="13.8" fill="#1f4650"/><rect x="69.5" y="29.4" width="3.5" height="10.6" fill="#d9cfb4"/><rect x="73.0" y="28.0" width="3.5" height="12.0" fill="#4d5d4c"/><rect x="76.5" y="29.4" width="2" height="10.6" fill="#c9bc98"/><rect x="78.5" y="28.0" width="3" height="12.0" fill="#1b2a36"/><rect x="81.5" y="29.8" width="4" height="10.2" fill="#3a4d44"/><rect x="85.5" y="29.3" width="3" height="10.7" fill="#2f5560"/><rect x="88.5" y="28.8" width="4" height="11.2" fill="#d6c9a6"/><rect x="92.5" y="27.9" width="3" height="12.1" fill="#1b2a36"/><rect x="95.5" y="26.9" width="3" height="13.1" fill="#3a4d44"/><rect x="98.5" y="27.4" width="3" height="12.6" fill="#7a3a3a"/><rect x="0.0" y="45.7" width="2.5" height="13.3" fill="#e0d6bb"/><rect x="2.5" y="46.9" width="2.5" height="12.1" fill="#1f4650"/><rect x="5.0" y="45.0" width="2" height="14.0" fill="#567f86"/><rect x="7.0" y="47.9" width="3.5" height="11.1" fill="#1f4650"/><rect x="10.5" y="45.8" width="3.5" height="13.2" fill="#1f4650"/><rect x="14.0" y="48.6" width="3" height="10.4" fill="#b8935f"/><rect x="17.0" y="47.1" width="2.5" height="11.9" fill="#c9bc98"/><rect x="19.5" y="47.0" width="2.5" height="12.0" fill="#2f5560"/><rect x="22.0" y="45.4" width="3.5" height="13.6" fill="#1f4650"/><rect x="25.5" y="45.6" width="2" height="13.4" fill="#b8935f"/><rect x="27.5" y="45.9" width="3.5" height="13.1" fill="#7a3a3a"/><rect x="31.0" y="45.4" width="3.5" height="13.6" fill="#a8b0a6"/><rect x="34.5" y="48.6" width="3" height="10.4" fill="#7f8e8e"/><rect x="37.5" y="47.3" width="3.5" height="11.7" fill="#d6c9a6"/><rect x="41.0" y="48.3" width="2.5" height="10.7" fill="#2c4038"/><rect x="43.5" y="48.3" width="2" height="10.7" fill="#33638c"/><rect x="45.5" y="46.5" width="2.5" height="12.5" fill="#d9cfb4"/><rect x="48.0" y="48.3" width="3" height="10.7" fill="#2c4038"/><rect x="51.0" y="48.9" width="2" height="10.1" fill="#b8935f"/><rect x="53.0" y="46.0" width="4" height="13.0" fill="#2c4038"/><rect x="57.0" y="45.1" width="3.5" height="13.9" fill="#7a3a3a"/><rect x="60.5" y="48.8" width="2.5" height="10.2" fill="#7a3a3a"/><rect x="63.0" y="47.0" width="3" height="12.0" fill="#c9bc98"/><rect x="66.0" y="46.8" width="3" height="12.2" fill="#2c4038"/><rect x="69.0" y="45.4" width="2" height="13.6" fill="#1f4650"/><rect x="71.0" y="46.3" width="3.5" height="12.7" fill="#3a4d44"/><rect x="74.5" y="45.7" width="3.5" height="13.3" fill="#3a4d44"/><rect x="78.0" y="46.8" width="2.5" height="12.2" fill="#3a4d44"/><rect x="80.5" y="48.8" width="4" height="10.2" fill="#33638c"/><rect x="84.5" y="46.5" width="2.5" height="12.5" fill="#2c4038"/><rect x="87.0" y="48.4" width="2.5" height="10.6" fill="#b8935f"/><rect x="89.5" y="48.7" width="4" height="10.3" fill="#3a4d44"/><rect x="93.5" y="46.7" width="4" height="12.3" fill="#b8935f"/><rect x="97.5" y="48.7" width="4" height="10.3" fill="#7a3a3a"/><rect x="0.0" y="67.0" width="3" height="11.0" fill="#b8935f"/><rect x="3.0" y="65.3" width="4" height="12.7" fill="#2f5560"/><rect x="7.0" y="65.3" width="2" height="12.7" fill="#3a4d44"/><rect x="9.0" y="65.0" width="4" height="13.0" fill="#567f86"/><rect x="13.0" y="65.1" width="3.5" height="12.9" fill="#d9cfb4"/><rect x="16.5" y="63.2" width="4" height="14.8" fill="#3a4d44"/><rect x="20.5" y="63.3" width="3" height="14.7" fill="#7a3a3a"/><rect x="23.5" y="66.6" width="3.5" height="11.4" fill="#b8935f"/><rect x="27.0" y="65.3" width="3.5" height="12.7" fill="#d6c9a6"/><rect x="30.5" y="65.4" width="2.5" height="12.6" fill="#7a3a3a"/><rect x="33.0" y="63.9" width="3" height="14.1" fill="#2c4038"/><rect x="36.0" y="66.6" width="3" height="11.4" fill="#2c4038"/><rect x="39.0" y="66.3" width="3.5" height="11.7" fill="#b8935f"/><rect x="42.5" y="63.5" width="3.5" height="14.5" fill="#1b2a36"/><rect x="46.0" y="66.5" width="2.5" height="11.5" fill="#a8b0a6"/><rect x="48.5" y="65.5" width="4" height="12.5" fill="#a8b0a6"/><rect x="52.5" y="65.7" width="2.5" height="12.3" fill="#d6c9a6"/><rect x="55.0" y="67.1" width="3" height="10.9" fill="#33638c"/><rect x="58.0" y="64.2" width="3.5" height="13.8" fill="#7f8e8e"/><rect x="61.5" y="65.0" width="3" height="13.0" fill="#4d5d4c"/><rect x="64.5" y="63.2" width="4" height="14.8" fill="#b8935f"/><rect x="68.5" y="63.1" width="2.5" height="14.9" fill="#b8935f"/><rect x="71.0" y="66.1" width="2" height="11.9" fill="#3d6e7a"/><rect x="73.0" y="66.1" width="2.5" height="11.9" fill="#2c4038"/><rect x="75.5" y="63.6" width="3.5" height="14.4" fill="#567f86"/><rect x="79.0" y="66.6" width="3.5" height="11.4" fill="#3a4d44"/><rect x="82.5" y="65.1" width="4" height="12.9" fill="#c9bc98"/><rect x="86.5" y="66.0" width="2" height="12.0" fill="#1b2a36"/><rect x="88.5" y="63.4" width="3.5" height="14.6" fill="#567f86"/><rect x="92.0" y="64.5" width="2" height="13.5" fill="#567f86"/><rect x="94.0" y="64.6" width="2" height="13.4" fill="#e0d6bb"/><rect x="96.0" y="66.1" width="2" height="11.9" fill="#b8935f"/><rect x="98.0" y="67.2" width="3.5" height="10.8" fill="#a8b0a6"/><rect x="0.0" y="83.6" width="3" height="13.4" fill="#3d6e7a"/><rect x="3.0" y="83.2" width="4" height="13.8" fill="#b8935f"/><rect x="7.0" y="85.1" width="2.5" height="11.9" fill="#1b2a36"/><rect x="9.5" y="82.3" width="2.5" height="14.7" fill="#4d5d4c"/><rect x="12.0" y="83.0" width="4" height="14.0" fill="#4d5d4c"/><rect x="16.0" y="84.1" width="3.5" height="12.9" fill="#1b2a36"/><rect x="19.5" y="84.7" width="3" height="12.3" fill="#2f5560"/><rect x="22.5" y="86.0" width="3" height="11.0" fill="#2f5560"/><rect x="25.5" y="83.9" width="4" height="13.1" fill="#7a3a3a"/><rect x="29.5" y="84.2" width="4" height="12.8" fill="#33638c"/><rect x="33.5" y="83.4" width="2" height="13.6" fill="#a8b0a6"/><rect x="35.5" y="83.9" width="3.5" height="13.1" fill="#7f8e8e"/><rect x="39.0" y="84.9" width="4" height="12.1" fill="#7a3a3a"/><rect x="43.0" y="84.8" width="2.5" height="12.2" fill="#2c4038"/><rect x="45.5" y="82.0" width="3.5" height="15.0" fill="#3d6e7a"/><rect x="49.0" y="86.1" width="2.5" height="10.9" fill="#567f86"/><rect x="51.5" y="85.5" width="3.5" height="11.5" fill="#d6c9a6"/><rect x="55.0" y="82.5" width="3.5" height="14.5" fill="#4d5d4c"/><rect x="58.5" y="85.2" width="4" height="11.8" fill="#4d5d4c"/><rect x="62.5" y="84.3" width="2" height="12.7" fill="#1b2a36"/><rect x="64.5" y="84.3" width="3" height="12.7" fill="#567f86"/><rect x="67.5" y="82.2" width="3" height="14.8" fill="#c9bc98"/><rect x="70.5" y="86.1" width="2.5" height="10.9" fill="#4d5d4c"/><rect x="73.0" y="84.7" width="2.5" height="12.3" fill="#2f5560"/><rect x="75.5" y="84.6" width="3" height="12.4" fill="#d9cfb4"/><rect x="78.5" y="84.1" width="3" height="12.9" fill="#7a3a3a"/><rect x="81.5" y="84.1" width="2.5" height="12.9" fill="#2f5560"/><rect x="84.0" y="85.1" width="2" height="11.9" fill="#d6c9a6"/><rect x="86.0" y="84.5" width="2.5" height="12.5" fill="#3d6e7a"/><rect x="88.5" y="86.1" width="3.5" height="10.9" fill="#4d5d4c"/><rect x="92.0" y="85.8" width="2.5" height="11.2" fill="#3a4d44"/><rect x="94.5" y="83.4" width="2.5" height="13.6" fill="#7f8e8e"/><rect x="97.0" y="83.2" width="3" height="13.8" fill="#d9cfb4"/><rect x="0" y="20" width="100" height="3.2" fill="#e4dccb"/><rect x="0" y="0" width="100" height="3" fill="#b9ad97" opacity="0.55"/><rect x="0" y="40" width="100" height="3.2" fill="#e4dccb"/><rect x="0" y="22.8" width="100" height="3.2" fill="#b9ad97" opacity="0.55"/><rect x="0" y="59" width="100" height="3.2" fill="#e4dccb"/><rect x="0" y="41.8" width="100" height="3.2" fill="#b9ad97" opacity="0.55"/><rect x="0" y="78" width="100" height="3.2" fill="#e4dccb"/><rect x="0" y="59.8" width="100" height="3.2" fill="#b9ad97" opacity="0.55"/><rect x="0" y="97" width="100" height="3.2" fill="#e4dccb"/><rect x="0" y="78.8" width="100" height="3.2" fill="#b9ad97" opacity="0.55"/><rect x="15" y="0" width="2.8" height="97" fill="#ebe4d6"/><rect x="43" y="0" width="2.8" height="97" fill="#ebe4d6"/><rect x="69.5" y="0" width="2.8" height="97" fill="#ebe4d6"/><rect x="97.5" y="0" width="2.5" height="97" fill="#e6dfd0"/><rect x="0" y="78" width="9" height="19" fill="#1b2430"/><rect x="23" y="82" width="9" height="15" fill="#15170f"/></g><g filter="url(#pb)"><ellipse cx="54.5" cy="50.5" rx="13.8" ry="15" fill="#8f5a30"/><ellipse cx="50" cy="44" rx="7" ry="5" fill="#a9713c"/><ellipse cx="54.5" cy="54" rx="7.6" ry="10" fill="#e3b092"/><path d="M46 44 Q54 38 63 46 Q58 41 50 47 Z" fill="#b67c42"/><path d="M48 62 H61 V68 H48 Z" fill="#e3b092"/><path d="M31 97 C31 78 36 66 47 64 L54.5 72 L62 64 C78 66 86 80 88 97 Z" fill="#f3d0ca"/><path d="M40 92 Q58 84 80 92 V97 H40 Z" fill="#f0c4bb"/><ellipse cx="54.5" cy="59.5" rx="2.2" ry="0.9" fill="#c45a6a"/></g></svg>
<svg class="abs" style="left:42.5px;top:977.5px;" width="17" height="17" viewBox="0 0 17 17"><rect x="5.6" y="1.5" width="5.8" height="9" rx="2.9" fill="#e8505b"/><path d="M3.2 8 C3.2 13.6 13.8 13.6 13.8 8 M8.5 12.4 V15 M6 15.4 H11" fill="none" stroke="#e8505b" stroke-width="1.3" stroke-linecap="round"/><path d="M1.5 16 L15.5 1" stroke="#2b2b2d" stroke-width="3.2"/><path d="M1.5 16 L15.5 1" stroke="#e8505b" stroke-width="1.3" stroke-linecap="round"/></svg>
<div class="t" style="left:66.0px;top:976.5px;font-size:15.5px;line-height:20px;color:#fff;letter-spacing:0.054px;">Kristina Margaryan</div>
<div class="abs" style="left:34px;top:964px;width:288px;height:37px;border-radius:0 0 5px 5px;background:linear-gradient(to bottom,rgba(6,6,6,0.12) 0,rgba(6,6,6,.72) 45%,rgba(3,3,3,.9) 100%)"></div>
<svg class="abs" style="left:169.5px;top:979px;" width="17" height="10" viewBox="0 0 17 10"><path d="M1.5 1.5 L8.5 8 L15.5 1.5" fill="none" stroke="#fff" stroke-width="1.9" stroke-linecap="round" stroke-linejoin="round"/></svg>
<div id="zbot" class="abs"><svg class="abs" style="left:42px;top:58px" width="32" height="32" viewBox="0 0 32 32"><rect x="11.2" y="2" width="9.6" height="17" rx="4.8" fill="#acacac"/><path d="M7.4 13.5 C7.4 19 11 22 16 22 C21 22 24.6 19 24.6 13.5" fill="none" stroke="#acacac" stroke-width="1.8" stroke-linecap="round"/><path d="M16 22 V27.5 M11.5 28 H20.5" stroke="#acacac" stroke-width="1.8" stroke-linecap="round"/><path d="M2.5 30 L30 2.5" stroke="#1a1a1a" stroke-width="4.5"/><path d="M2.5 30 L30 2.5" stroke="#f0565b" stroke-width="1.8" stroke-linecap="round"/></svg>
<svg class="abs" style="left:91px;top:70px" width="12" height="9" viewBox="0 0 12 9"><path d="M2.2 6.4 L6 2.6 L9.8 6.4" fill="none" stroke="#acacac" stroke-width="1.7" stroke-linecap="round" stroke-linejoin="round"/></svg>
<div class="abs zl" style="left:-42.5px;width:200px;color:#d2d2d2;letter-spacing:0.125px">Unmute</div>
<svg class="abs" style="left:158px;top:58px" width="32" height="32" viewBox="0 0 32 32"><rect x="1" y="8" width="20.5" height="17" rx="3" fill="#acacac"/><path d="M22.5 14 L29.2 9.6 Q30.8 8.8 30.8 10.6 V22.4 Q30.8 24.2 29.2 23.4 L22.5 19 Z" fill="#acacac"/><path d="M2.5 30 L30 2.5" stroke="#1a1a1a" stroke-width="4.5"/><path d="M2.5 30 L30 2.5" stroke="#f0565b" stroke-width="1.8" stroke-linecap="round"/></svg>
<svg class="abs" style="left:214px;top:70px" width="12" height="9" viewBox="0 0 12 9"><path d="M2.2 6.4 L6 2.6 L9.8 6.4" fill="none" stroke="#acacac" stroke-width="1.7" stroke-linecap="round" stroke-linejoin="round"/></svg>
<div class="abs zl" style="left:74px;width:200px;color:#d2d2d2;letter-spacing:-0.036px">Start Video</div>
<svg class="abs" style="left:324px;top:60px" width="24" height="28" viewBox="0 0 24 28"><path d="M12 1.2 L22.6 5.2 V12.4 C22.6 19.4 18.2 24.2 12 26.8 C5.8 24.2 1.4 19.4 1.4 12.4 V5.2 Z" fill="#acacac"/><path d="M12 4.2 V14 H19.9 V7 Z" fill="#1a1a1a"/><path d="M12 14 H4.2 C4.6 18.6 7.6 21.8 12 23.8 Z" fill="#1a1a1a"/></svg>
<div class="abs zl" style="left:236.5px;width:200px;color:#d2d2d2;letter-spacing:-0.154px">Security</div>
<svg class="abs" style="left:452px;top:62px" width="32" height="24" viewBox="0 0 32 24"><circle cx="11.5" cy="7" r="5.2" fill="#acacac"/><path d="M1 23 C1 16.5 5.5 14 11.5 14 C17.5 14 22 16.5 22 23 Q22 24 21 24 H2 Q1 24 1 23 Z" fill="#acacac"/><circle cx="22.8" cy="8" r="4.3" fill="#acacac"/><path d="M24.2 24 C24.4 19.6 22.8 16.6 20.2 14.9 C21 14.6 22 14.5 23 14.5 C27.8 14.5 31 17 31 22.6 Q31 24 29.8 24 Z" fill="#acacac"/></svg>
<div class="abs" style="left:489px;top:63px;font-size:14.5px;color:#acacac;font-weight:400;line-height:18px">36</div>
<svg class="abs" style="left:528px;top:70px" width="12" height="9" viewBox="0 0 12 9"><path d="M2.2 6.4 L6 2.6 L9.8 6.4" fill="none" stroke="#acacac" stroke-width="1.7" stroke-linecap="round" stroke-linejoin="round"/></svg>
<div class="abs zl" style="left:368px;width:200px;color:#d2d2d2;letter-spacing:-0.083px">Participants</div>
<svg class="abs" style="left:592px;top:61px" width="28" height="26" viewBox="0 0 28 26"><path d="M5 1.5 H23 Q26.6 1.5 26.6 5 V15.5 Q26.6 19 23 19 H13.5 L7.8 24.2 Q6.6 25 6.6 23.6 V19 H5 Q1.4 19 1.4 15.5 V5 Q1.4 1.5 5 1.5 Z" fill="#acacac"/></svg>
<svg class="abs" style="left:641px;top:70px" width="12" height="9" viewBox="0 0 12 9"><path d="M2.2 6.4 L6 2.6 L9.8 6.4" fill="none" stroke="#acacac" stroke-width="1.7" stroke-linecap="round" stroke-linejoin="round"/></svg>
<div class="abs zl" style="left:506px;width:200px;color:#d2d2d2;letter-spacing:-0.327px">Chat</div>
<svg class="abs" style="left:709px;top:63px" width="30" height="22" viewBox="0 0 30 22"><rect x="0" y="0" width="30" height="22" rx="3.5" fill="#23d959"/><path d="M15 17 V6.2 M10.6 10.4 L15 6 L19.4 10.4" fill="none" stroke="#14301d" stroke-width="2" stroke-linecap="round" stroke-linejoin="round"/></svg>
<svg class="abs" style="left:764px;top:70px" width="12" height="9" viewBox="0 0 12 9"><path d="M2.2 6.4 L6 2.6 L9.8 6.4" fill="none" stroke="#acacac" stroke-width="1.7" stroke-linecap="round" stroke-linejoin="round"/></svg>
<div class="abs zl" style="left:624.5px;width:200px;color:#23d959;letter-spacing:-0.511px">Share Screen</div>
<svg class="abs" style="left:834px;top:58px" width="27" height="30" viewBox="0 0 27 30"><path d="M5 1 H16.5 L26 10.5 V25.5 Q26 29.5 22 29.5 H5 Q1 29.5 1 25.5 V5 Q1 1 5 1 Z" fill="#acacac"/><path d="M17.6 1.6 V7 Q17.6 9.6 20.2 9.6 H25.6" fill="none" stroke="#1a1a1a" stroke-width="1.6"/><path d="M12 13.5 Q12.8 18.2 17.5 19 Q12.8 19.8 12 24.5 Q11.2 19.8 6.5 19 Q11.2 18.2 12 13.5 Z" fill="#1a1a1a"/><path d="M18.5 12.5 Q18.8 14.2 20.5 14.5 Q18.8 14.8 18.5 16.5 Q18.2 14.8 16.5 14.5 Q18.2 14.2 18.5 12.5 Z" fill="#1a1a1a"/></svg>
<div class="abs zl" style="left:747px;width:200px;color:#d2d2d2;letter-spacing:-0.095px">Start Summary</div>
<svg class="abs" style="left:950px;top:58px" width="32" height="32" viewBox="0 0 32 32"><path d="M14.3 3.5 C15.2 11.5 19.5 15.8 28.6 17 C19.5 18.2 15.2 22.5 14.3 30.5 C13.4 22.5 9.1 18.2 0 17 C9.1 15.8 13.4 11.5 14.3 3.5 Z" fill="#acacac"/><path d="M26 0.5 C26.5 4 28 5.6 31.5 6 C28 6.4 26.5 8 26 11.5 C25.5 8 24 6.4 20.5 6 C24 5.6 25.5 4 26 0.5 Z" fill="#acacac"/></svg>
<div class="abs zl" style="left:866.5px;width:200px;color:#d2d2d2;letter-spacing:-0.095px">AI Companion</div>
<svg class="abs" style="left:1080px;top:58px" width="57" height="25" viewBox="0 0 57 25"><rect x="0" y="0" width="25" height="25" rx="3" fill="#acacac"/><rect x="9" y="7.5" width="2.4" height="10" fill="#1a1a1a"/><rect x="14" y="7.5" width="2.4" height="10" fill="#1a1a1a"/><rect x="32" y="0" width="25" height="25" rx="3" fill="#acacac"/><rect x="39.5" y="7.5" width="10" height="10" rx="1.2" fill="#1a1a1a"/></svg>
<div class="abs zl" style="left:1008px;width:200px;top:95px;letter-spacing:0.001px">Pause/stop recording</div>
<svg class="abs" style="left:1228px;top:58px" width="30" height="30" viewBox="0 0 30 30"><circle cx="13" cy="16" r="11.4" fill="#acacac"/><circle cx="9" cy="13" r="1.7" fill="#1a1a1a"/><circle cx="17" cy="13" r="1.7" fill="#1a1a1a"/><path d="M7.6 17.6 Q13 24.6 18.4 17.6 Z" fill="#1a1a1a"/><circle cx="24" cy="6.5" r="6" fill="#1a1a1a"/><path d="M24 2.6 V10.4 M20.1 6.5 H27.9" stroke="#acacac" stroke-width="1.5" stroke-linecap="round"/></svg>
<div class="abs zl" style="left:1140.5px;width:200px;color:#d2d2d2;letter-spacing:-0.491px">Reactions</div>
<svg class="abs" style="left:1329px;top:63px" width="24" height="24" viewBox="0 0 24 24"><path d="M2 8.5 V5.5 Q2 2 5.5 2 H9.5" fill="none" stroke="#acacac" stroke-width="2" stroke-linecap="round"/><path d="M22 14.5 V18.5 Q22 22 18.5 22 H14.5" fill="none" stroke="#acacac" stroke-width="2" stroke-linecap="round"/><circle cx="18" cy="6" r="3.4" fill="none" stroke="#acacac" stroke-width="2"/><circle cx="6" cy="18" r="3.4" fill="none" stroke="#acacac" stroke-width="2"/></svg>
<svg class="abs" style="left:1371px;top:70px" width="12" height="9" viewBox="0 0 12 9"><path d="M2.2 6.4 L6 2.6 L9.8 6.4" fill="none" stroke="#acacac" stroke-width="1.7" stroke-linecap="round" stroke-linejoin="round"/></svg>
<div class="abs zl" style="left:1241.5px;width:200px;color:#d2d2d2;letter-spacing:-0.517px">Apps</div>
<svg class="abs" style="left:1438px;top:61px" width="28" height="24" viewBox="0 0 28 24"><path d="M12 19.5 H5.5 Q2 19.5 2 16 V5.5 Q2 2 5.5 2 H21.5 Q25 2 25 5.5 V13" fill="none" stroke="#acacac" stroke-width="2" stroke-linecap="round"/><rect x="13.5" y="17" width="13.5" height="5.6" rx="2.8" fill="#acacac"/></svg>
<svg class="abs" style="left:1492px;top:70px" width="12" height="9" viewBox="0 0 12 9"><path d="M2.2 6.4 L6 2.6 L9.8 6.4" fill="none" stroke="#acacac" stroke-width="1.7" stroke-linecap="round" stroke-linejoin="round"/></svg>
<div class="abs zl" style="left:1352.5px;width:200px;color:#d2d2d2;letter-spacing:0.010px">Whiteboards</div>
<svg class="abs" style="left:1562px;top:60px" width="28" height="28" viewBox="0 0 28 28"><path d="M12 24 H9 Q5.5 24 5.5 20.5 V5.5 Q5.5 2 9 2 H19.5 Q23 2 23 5.5 V19" fill="none" stroke="#acacac" stroke-width="2" stroke-linecap="round"/><path d="M10.5 8 H18.5 M10.5 12 H18.5 M10.5 16 H15" stroke="#acacac" stroke-width="1.6" stroke-linecap="round"/><path d="M2.6 7 H5 M2.6 11 H5 M2.6 15 H5 M2.6 19 H5" stroke="#acacac" stroke-width="1.6" stroke-linecap="round"/><rect x="13.5" y="21.6" width="13" height="5.4" rx="2.7" fill="#acacac"/></svg>
<svg class="abs" style="left:1615px;top:70px" width="12" height="9" viewBox="0 0 12 9"><path d="M2.2 6.4 L6 2.6 L9.8 6.4" fill="none" stroke="#acacac" stroke-width="1.7" stroke-linecap="round" stroke-linejoin="round"/></svg>
<div class="abs zl" style="left:1475px;width:200px;color:#d2d2d2;letter-spacing:-0.170px">Notes</div>
<svg class="abs" style="left:1676px;top:70px" width="28" height="8" viewBox="0 0 28 8"><circle cx="3.5" cy="4" r="2.6" fill="#acacac"/><circle cx="14" cy="4" r="2.6" fill="#acacac"/><circle cx="24.5" cy="4" r="2.6" fill="#acacac"/></svg>
<div class="abs zl" style="left:1589.5px;width:200px;color:#d2d2d2;letter-spacing:0.487px">More</div>
<div class="abs" style="left:1828px;top:68px;width:77px;height:34px;border-radius:9px;background:#c4262c;color:#fff;font-weight:700;font-size:15px;line-height:34px;text-align:center">End</div></div>
<div class="abs" style="left:15px;top:1069.5px;width:50px;height:50px;border-radius:25px;background:rgba(16,20,25,.86);border:1.5px solid #262d35"><svg class="abs" style="left:9.5px;top:9.5px" width="28" height="28" viewBox="0 0 28 28"><g transform="rotate(46 14 14)" fill="none" stroke="#23d959" stroke-width="2" stroke-linejoin="round" stroke-linecap="round"><path d="M10.6 3.5 Q10.6 1.5 12.6 1.5 H15.4 Q17.4 1.5 17.4 3.5 V19.5 Q17 25 13.2 26.6 Q10.6 27.2 10.6 24 Z"/><path d="M10.6 7.6 H17.4"/></g></svg></div>

</div>
</body>
</html>
